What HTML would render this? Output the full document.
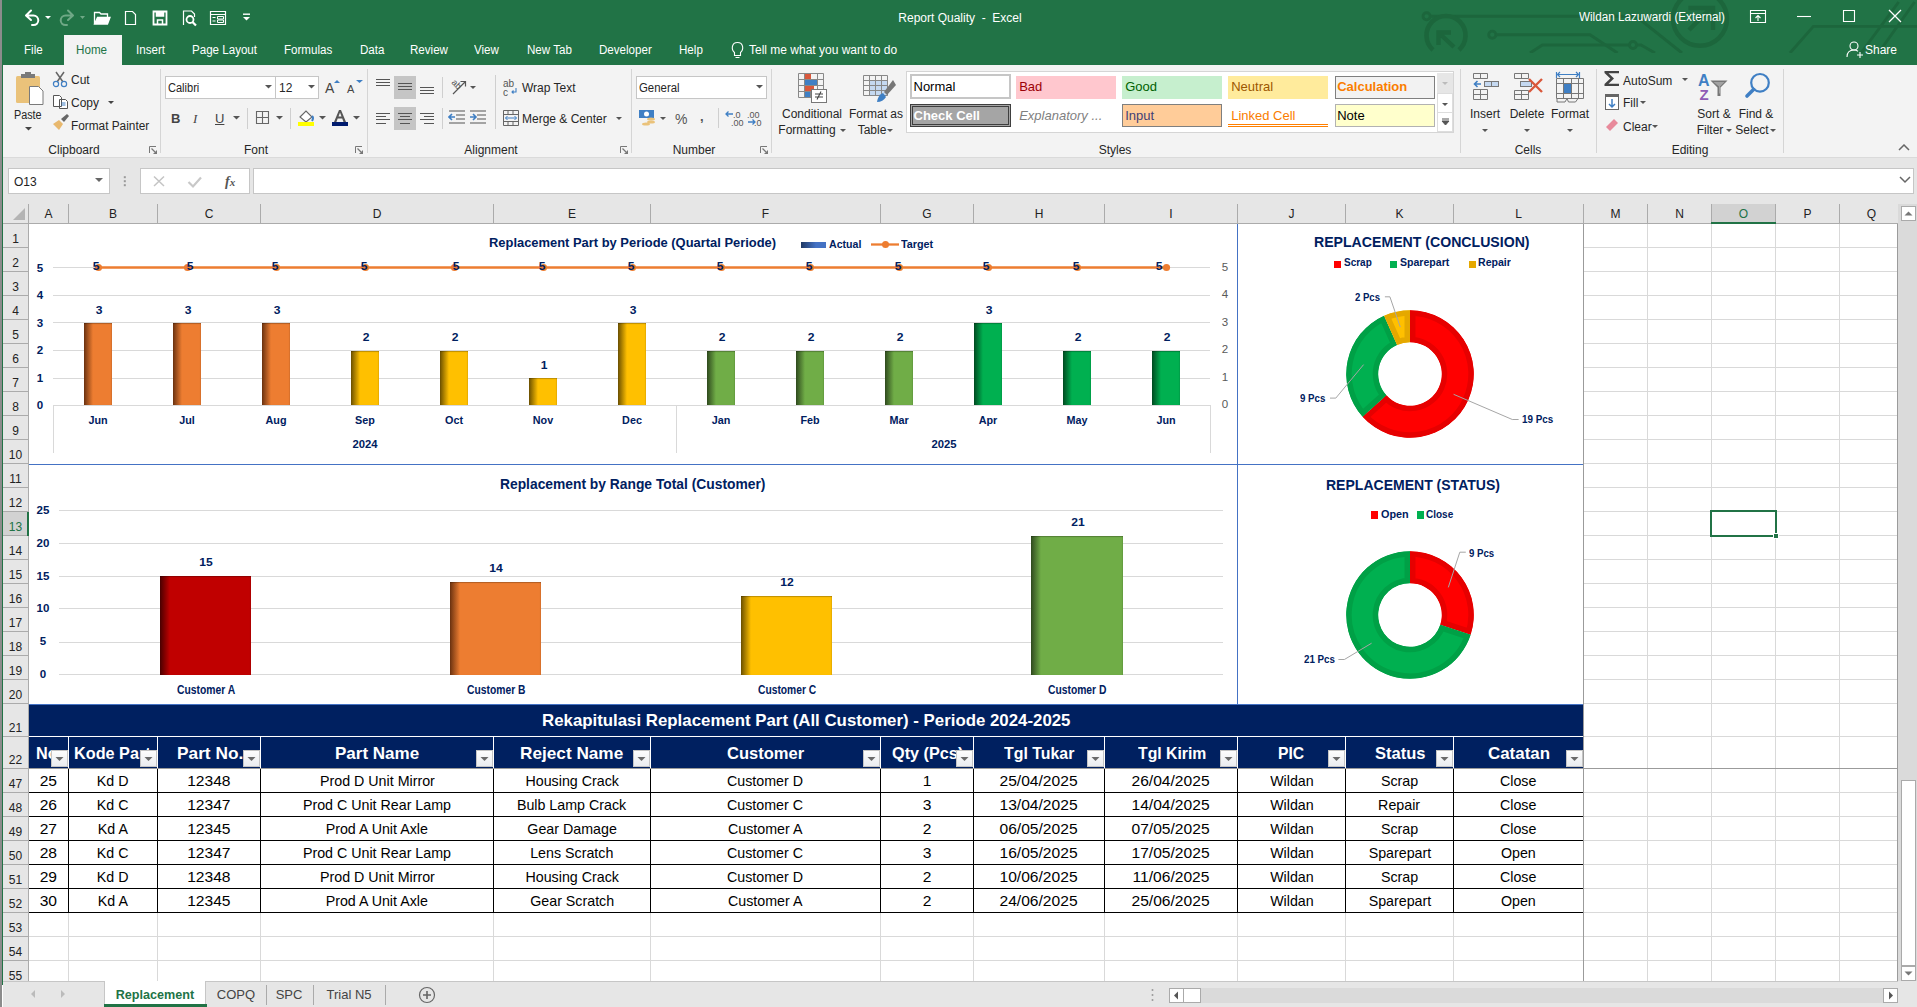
<!DOCTYPE html><html><head><meta charset="utf-8"><style>
html,body{margin:0;padding:0;width:1917px;height:1007px;overflow:hidden;background:#fff;font-family:"Liberation Sans",sans-serif;}
div{box-sizing:border-box}
</style></head><body><div style="position:relative;width:1917px;height:1007px;overflow:hidden">
<div style="position:absolute;left:0px;top:0px;width:2px;height:1007px;background:#8c8c8c;"></div>
<div style="position:absolute;left:2px;top:0px;width:1915px;height:65px;background:#217346;"></div>
<div style="position:absolute;left:2px;top:65px;width:1px;height:920px;background:#217346;"></div>
<svg style="position:absolute;left:0;top:0" width="1917" height="53"><g stroke="#1c663c" stroke-width="2.9" fill="none">
<circle cx="1426.6" cy="16.3" r="3.6"/><path d="M1430.2 16.3 H1636 L1682 53"/>
<path d="M1433 50 A19.5 19.5 0 1 1 1459 50" stroke-width="4.6"/><path d="M1454 47 L1440 34 M1438.5 45 V32.5 H1451" stroke-width="4.4"/>
<circle cx="1492.3" cy="34.7" r="3.6"/><path d="M1495.9 34.7 H1590 L1617.5 53"/>
<path d="M1530 53 L1542.4 45 H1629.5 M1636.5 45 H1641 L1655 53"/><circle cx="1633" cy="45" r="3.5"/>
<circle cx="1700" cy="18.8" r="27" stroke-width="4.4"/><path d="M1689 30 L1711 8 M1688.4 8 H1713 V30" stroke-width="4.4"/>
<path d="M1790 53 L1813.4 26.4 H1917 M1861 53 L1898.7 2 M1878.4 53 L1914.6 2"/>
</g></svg>
<svg style="position:absolute;left:0;top:0" width="300" height="36" fill="none" stroke="#fff" stroke-width="2">
<path d="M26 15.5 L31 10.5 M26 15.5 L31 20 M27 15.5 H33.5 a4.8 4.8 0 0 1 0 9.6 H32" stroke-linecap="round"/>
<path d="M45 16 h6 l-3 3z" fill="#fff" stroke="none"/>
<g stroke="#6fa886"><path d="M73 15.5 L68 10.5 M73 15.5 L68 20 M72 15.5 H65.5 a4.8 4.8 0 0 0 0 9.6 H67" stroke-linecap="round"/></g>
<path d="M80 16 h5 l-2.5 3z" fill="#6fa886" stroke="none"/>
<path d="M94.5 24 V12.5 h5 l1.5 1.5 h6.5 v3" stroke-width="1.3"/><path d="M94.5 24 l3 -6.5 h12.5 l-2.5 6.5z" fill="#fff" stroke-width="1.3"/>
<path d="M125.5 11.5 h7 l3 3 v10 h-10z" stroke-width="1.2"/>
<path d="M153.5 11.5 h13 v13 h-13z" stroke-width="1.8"/><path d="M156.5 11.5 v4.5 h7 v-4.5" fill="#fff" stroke-width="1.5"/><path d="M157.5 24.5 v-4.5 h5 v4.5" stroke-width="1.5"/>
<path d="M183.5 25 v-14 h8 l3 3 v3" stroke-width="1.2"/><circle cx="190" cy="19.5" r="3.5" stroke-width="1.8"/><path d="M192.5 22 l3.5 3.5" stroke-width="2.2"/>
<path d="M210.5 11.5 h15 v13 h-15z M210.5 14.5 h15" stroke-width="1.2"/><path d="M212.5 17.5 h3 M212.5 21 h3" stroke-width="1.2"/><path d="M217.5 16.5 h6 v2.5 h-6z M217.5 20 h6 v2.5 h-6z" stroke-width="1"/>
<path d="M243 14.2 h7" stroke-width="1.4"/><path d="M243 17 h7 l-3.5 3.5z" fill="#fff" stroke="none"/>
</svg>
<div style="position:absolute;left:960px;top:10.8px;font-size:12px;line-height:14.4px;color:#fff;font-weight:normal;font-style:normal;white-space:nowrap;transform:translateX(-50%);transform-origin:50% 50%;">Report Quality&nbsp; -&nbsp; Excel</div>
<div style="position:absolute;left:1579px;top:9.8px;font-size:12px;line-height:14.4px;color:#fff;font-weight:normal;font-style:normal;white-space:nowrap;transform: scaleX(0.973);transform-origin:0 50%;">Wildan Lazuwardi (External)</div>
<svg style="position:absolute;left:1740px;top:0px" width="177" height="36" fill="none" stroke="#fff" stroke-width="1.1">
<path d="M10.5 10.5 h15 v12 h-15z M10.5 13.5 h15 M18 21 v-5 M15.5 18 l2.5 -2.5 l2.5 2.5"/>
<path d="M57 16.5 h14"/>
<path d="M103.5 10.5 h11 v11 h-11z"/>
<path d="M149 10 l12 12 M161 10 l-12 12" stroke-width="1.3"/>
</svg>
<div style="position:absolute;left:64px;top:35px;width:58px;height:31px;background:#f3f3f3;"></div>
<div style="position:absolute;left:24px;top:42.8px;font-size:12px;line-height:14.4px;color:#fff;font-weight:normal;font-style:normal;white-space:nowrap;transform: scaleX(0.965);transform-origin:0 50%;">File</div>
<div style="position:absolute;left:136px;top:42.8px;font-size:12px;line-height:14.4px;color:#fff;font-weight:normal;font-style:normal;white-space:nowrap;transform: scaleX(0.965);transform-origin:0 50%;">Insert</div>
<div style="position:absolute;left:192px;top:42.8px;font-size:12px;line-height:14.4px;color:#fff;font-weight:normal;font-style:normal;white-space:nowrap;transform: scaleX(0.965);transform-origin:0 50%;">Page Layout</div>
<div style="position:absolute;left:284px;top:42.8px;font-size:12px;line-height:14.4px;color:#fff;font-weight:normal;font-style:normal;white-space:nowrap;transform: scaleX(0.965);transform-origin:0 50%;">Formulas</div>
<div style="position:absolute;left:360px;top:42.8px;font-size:12px;line-height:14.4px;color:#fff;font-weight:normal;font-style:normal;white-space:nowrap;transform: scaleX(0.965);transform-origin:0 50%;">Data</div>
<div style="position:absolute;left:410px;top:42.8px;font-size:12px;line-height:14.4px;color:#fff;font-weight:normal;font-style:normal;white-space:nowrap;transform: scaleX(0.965);transform-origin:0 50%;">Review</div>
<div style="position:absolute;left:474px;top:42.8px;font-size:12px;line-height:14.4px;color:#fff;font-weight:normal;font-style:normal;white-space:nowrap;transform: scaleX(0.965);transform-origin:0 50%;">View</div>
<div style="position:absolute;left:527px;top:42.8px;font-size:12px;line-height:14.4px;color:#fff;font-weight:normal;font-style:normal;white-space:nowrap;transform: scaleX(0.965);transform-origin:0 50%;">New Tab</div>
<div style="position:absolute;left:599px;top:42.8px;font-size:12px;line-height:14.4px;color:#fff;font-weight:normal;font-style:normal;white-space:nowrap;transform: scaleX(0.965);transform-origin:0 50%;">Developer</div>
<div style="position:absolute;left:679px;top:42.8px;font-size:12px;line-height:14.4px;color:#fff;font-weight:normal;font-style:normal;white-space:nowrap;transform: scaleX(0.965);transform-origin:0 50%;">Help</div>
<div style="position:absolute;left:76px;top:42.8px;font-size:12px;line-height:14.4px;color:#217346;font-weight:normal;font-style:normal;white-space:nowrap;transform: scaleX(0.97);transform-origin:0 50%;">Home</div>
<svg style="position:absolute;left:729px;top:39px" width="18" height="22" fill="none" stroke="#fff" stroke-width="1.1"><path d="M5.5 13.5 c-3.5 -3 -3 -10 3 -10 c6 0 6.5 7 3 10 v3 h-6z M6.5 18.5 h4"/></svg>
<div style="position:absolute;left:749px;top:42.8px;font-size:12px;line-height:14.4px;color:#fff;font-weight:normal;font-style:normal;white-space:nowrap;transform:;transform-origin:0 50%;">Tell me what you want to do</div>
<svg style="position:absolute;left:1845px;top:40px" width="20" height="20" fill="none" stroke="#fff" stroke-width="1.1"><circle cx="9" cy="6" r="4"/><path d="M2 17 c0 -5 3 -7 7 -7 c2 0 3 0.5 4 1.2 M12 15 h6 M15 12 v6"/></svg>
<div style="position:absolute;left:1865px;top:42.8px;font-size:12px;line-height:14.4px;color:#fff;font-weight:normal;font-style:normal;white-space:nowrap;transform:;transform-origin:0 50%;">Share</div>
<div style="position:absolute;left:3px;top:65px;width:1914px;height:93px;background:#f3f3f3;"></div>
<div style="position:absolute;left:3px;top:157px;width:1914px;height:1px;background:#dadada;"></div>
<div style="position:absolute;left:160px;top:69px;width:1px;height:84px;background:#d5d5d5;"></div>
<div style="position:absolute;left:367px;top:69px;width:1px;height:84px;background:#d5d5d5;"></div>
<div style="position:absolute;left:631px;top:69px;width:1px;height:84px;background:#d5d5d5;"></div>
<div style="position:absolute;left:771px;top:69px;width:1px;height:84px;background:#d5d5d5;"></div>
<div style="position:absolute;left:1460px;top:69px;width:1px;height:84px;background:#d5d5d5;"></div>
<div style="position:absolute;left:1596px;top:69px;width:1px;height:84px;background:#d5d5d5;"></div>
<div style="position:absolute;left:1783px;top:69px;width:1px;height:84px;background:#d5d5d5;"></div>
<div style="position:absolute;left:74px;top:142.8px;font-size:12px;line-height:14.4px;color:#262626;font-weight:normal;font-style:normal;white-space:nowrap;transform:translateX(-50%);transform-origin:50% 50%;">Clipboard</div>
<div style="position:absolute;left:256px;top:142.8px;font-size:12px;line-height:14.4px;color:#262626;font-weight:normal;font-style:normal;white-space:nowrap;transform:translateX(-50%);transform-origin:50% 50%;">Font</div>
<div style="position:absolute;left:491px;top:142.8px;font-size:12px;line-height:14.4px;color:#262626;font-weight:normal;font-style:normal;white-space:nowrap;transform:translateX(-50%);transform-origin:50% 50%;">Alignment</div>
<div style="position:absolute;left:694px;top:142.8px;font-size:12px;line-height:14.4px;color:#262626;font-weight:normal;font-style:normal;white-space:nowrap;transform:translateX(-50%);transform-origin:50% 50%;">Number</div>
<div style="position:absolute;left:1115px;top:142.8px;font-size:12px;line-height:14.4px;color:#262626;font-weight:normal;font-style:normal;white-space:nowrap;transform:translateX(-50%);transform-origin:50% 50%;">Styles</div>
<div style="position:absolute;left:1528px;top:142.8px;font-size:12px;line-height:14.4px;color:#262626;font-weight:normal;font-style:normal;white-space:nowrap;transform:translateX(-50%);transform-origin:50% 50%;">Cells</div>
<div style="position:absolute;left:1690px;top:142.8px;font-size:12px;line-height:14.4px;color:#262626;font-weight:normal;font-style:normal;white-space:nowrap;transform:translateX(-50%);transform-origin:50% 50%;">Editing</div>
<svg style="position:absolute;left:149px;top:145.5px" width="9" height="9"><path d="M0.5 7 V0.5 H7" fill="none" stroke="#777" stroke-width="1"/><path d="M2.5 2.5 L6 6" stroke="#777" stroke-width="1.2"/><path d="M8 4 V8 H4z" fill="#777"/></svg>
<svg style="position:absolute;left:355px;top:145.5px" width="9" height="9"><path d="M0.5 7 V0.5 H7" fill="none" stroke="#777" stroke-width="1"/><path d="M2.5 2.5 L6 6" stroke="#777" stroke-width="1.2"/><path d="M8 4 V8 H4z" fill="#777"/></svg>
<svg style="position:absolute;left:620px;top:145.5px" width="9" height="9"><path d="M0.5 7 V0.5 H7" fill="none" stroke="#777" stroke-width="1"/><path d="M2.5 2.5 L6 6" stroke="#777" stroke-width="1.2"/><path d="M8 4 V8 H4z" fill="#777"/></svg>
<svg style="position:absolute;left:760px;top:145.5px" width="9" height="9"><path d="M0.5 7 V0.5 H7" fill="none" stroke="#777" stroke-width="1"/><path d="M2.5 2.5 L6 6" stroke="#777" stroke-width="1.2"/><path d="M8 4 V8 H4z" fill="#777"/></svg>
<svg style="position:absolute;left:10px;top:72px" width="40" height="36">
<rect x="6" y="4" width="24" height="27" rx="1.5" fill="#eac27a"/>
<path d="M11 2 h14 v4 h-14z" fill="#7a7a7a"/><rect x="15" y="0" width="6" height="4" fill="#7a7a7a"/>
<path d="M19.5 14.5 h9 l4.5 4.5 v13.5 h-13.5z" fill="#fff" stroke="#7a7a7a" stroke-width="1"/>
</svg>
<div style="position:absolute;left:14px;top:107.8px;font-size:12px;line-height:14.4px;color:#262626;font-weight:normal;font-style:normal;white-space:nowrap;transform: scaleX(0.9);transform-origin:0 50%;">Paste</div>
<svg style="position:absolute;left:24.5px;top:127.25px" width="7.0" height="4.5"><path d="M0 0 H7.0 L3.5 3.5z" fill="#444"/></svg>
<svg style="position:absolute;left:52px;top:71px" width="18" height="64" fill="none">
<path d="M4 1 L11 11 M12 1 L5 11" stroke="#666" stroke-width="1.5"/><circle cx="4" cy="13" r="2.6" stroke="#3f7fc4" stroke-width="1.2"/><circle cx="12" cy="13" r="2.6" stroke="#3f7fc4" stroke-width="1.2"/>
<path d="M1.5 24.5 h6 l2 2 v9 h-8z M7.5 28.5 h6 l2 2 v7 h-8z" stroke="#555" stroke-width="1" fill="#fff"/><path d="M9.5 32 h4 M9.5 34 h4" stroke="#3f7fc4"/>
<path d="M9 48 l6 -5 l2 2 l-5 6z" fill="#666"/><path d="M1 53 l6 -4 l4 4 l-4 6z" fill="#e8b86d"/>
</svg>
<div style="position:absolute;left:71px;top:72.8px;font-size:12px;line-height:14.4px;color:#262626;font-weight:normal;font-style:normal;white-space:nowrap;transform:;transform-origin:0 50%;">Cut</div>
<div style="position:absolute;left:71px;top:95.8px;font-size:12px;line-height:14.4px;color:#262626;font-weight:normal;font-style:normal;white-space:nowrap;transform:;transform-origin:0 50%;">Copy</div>
<svg style="position:absolute;left:108px;top:100.5px" width="6" height="4"><path d="M0 0 H6 L3 3z" fill="#444"/></svg>
<div style="position:absolute;left:71px;top:118.8px;font-size:12px;line-height:14.4px;color:#262626;font-weight:normal;font-style:normal;white-space:nowrap;transform: scaleX(0.985);transform-origin:0 50%;">Format Painter</div>
<div style="position:absolute;left:165px;top:76px;width:154px;height:23px;background:#fff;border:1px solid #c6c6c6"></div>
<div style="position:absolute;left:275px;top:77px;width:1px;height:21px;background:#c6c6c6;"></div>
<div style="position:absolute;left:168px;top:80.8px;font-size:12px;line-height:14.4px;color:#262626;font-weight:normal;font-style:normal;white-space:nowrap;transform: scaleX(0.92);transform-origin:0 50%;">Calibri</div>
<div style="position:absolute;left:279px;top:80.8px;font-size:12px;line-height:14.4px;color:#262626;font-weight:normal;font-style:normal;white-space:nowrap;transform:;transform-origin:0 50%;">12</div>
<svg style="position:absolute;left:264.5px;top:85.25px" width="7.0" height="4.5"><path d="M0 0 H7.0 L3.5 3.5z" fill="#555"/></svg>
<svg style="position:absolute;left:307.5px;top:85.25px" width="7.0" height="4.5"><path d="M0 0 H7.0 L3.5 3.5z" fill="#555"/></svg>
<div style="position:absolute;left:325px;top:79.6px;font-size:14px;line-height:16.8px;color:#444;font-weight:normal;font-style:normal;white-space:nowrap;transform:;transform-origin:0 50%;">A</div>
<div style="position:absolute;left:347px;top:83.4px;font-size:11px;line-height:13.2px;color:#444;font-weight:normal;font-style:normal;white-space:nowrap;transform:;transform-origin:0 50%;">A</div>
<svg style="position:absolute;left:334px;top:79px" width="30" height="6"><path d="M0 4 h6 l-3 -3z" fill="#3f7fc4"/><path d="M22 1 h7 l-3.5 3z" fill="#3f7fc4"/></svg>
<div style="position:absolute;left:171px;top:111.2px;font-size:13px;line-height:15.6px;color:#444;font-weight:normal;font-style:normal;white-space:nowrap;transform:;transform-origin:0 50%;"><b>B</b></div>
<div style="position:absolute;left:193px;top:111.2px;font-size:13px;line-height:15.6px;color:#444;font-weight:normal;font-style:normal;white-space:nowrap;transform:;transform-origin:0 50%;font-family:'Liberation Serif'"><i>I</i></div>
<div style="position:absolute;left:215px;top:111.2px;font-size:13px;line-height:15.6px;color:#444;font-weight:normal;font-style:normal;white-space:nowrap;transform:;transform-origin:0 50%;"><u>U</u></div>
<svg style="position:absolute;left:232.5px;top:116.25px" width="7.0" height="4.5"><path d="M0 0 H7.0 L3.5 3.5z" fill="#555"/></svg>
<div style="position:absolute;left:247px;top:108px;width:1px;height:21px;background:#cfcfcf;"></div>
<div style="position:absolute;left:290px;top:108px;width:1px;height:21px;background:#cfcfcf;"></div>
<svg style="position:absolute;left:255px;top:110px" width="16" height="16" fill="none" stroke="#666" stroke-width="1.1"><path d="M1.5 1.5 h12 v12 h-12z M7.5 1.5 v12 M1.5 7.5 h12"/></svg>
<svg style="position:absolute;left:275.5px;top:116.25px" width="7.0" height="4.5"><path d="M0 0 H7.0 L3.5 3.5z" fill="#555"/></svg>
<svg style="position:absolute;left:297px;top:108px" width="20" height="20"><path d="M3 9 l6 -6 l6 6 l-6 5z" fill="#fff" stroke="#666" stroke-width="1.1"/><path d="M15 8 q2 2 0 5" stroke="#3f7fc4" stroke-width="2" fill="none"/><rect x="1" y="14" width="16" height="4" fill="#ffff00"/></svg>
<svg style="position:absolute;left:318.5px;top:116.25px" width="7.0" height="4.5"><path d="M0 0 H7.0 L3.5 3.5z" fill="#555"/></svg>
<svg style="position:absolute;left:331px;top:108px" width="20" height="20"><path d="M3 14 L8 2 h2 l5 12 h-2.5 l-1.3 -3.5 h-4.5 l-1.3 3.5z M7.5 8.5 h3 l-1.5 -4z" fill="#555"/><rect x="1" y="14" width="16" height="4" fill="#001b6e"/></svg>
<svg style="position:absolute;left:352.5px;top:116.25px" width="7.0" height="4.5"><path d="M0 0 H7.0 L3.5 3.5z" fill="#555"/></svg>
<div style="position:absolute;left:394px;top:76px;width:22px;height:23px;background:#c5c5c5;"></div>
<div style="position:absolute;left:394px;top:107px;width:22px;height:23px;background:#c5c5c5;"></div>
<svg style="position:absolute;left:376px;top:79px" width="20" height="20"><rect x="0" y="0" width="14" height="1" fill="#555"/><rect x="0" y="3" width="14" height="1" fill="#555"/><rect x="0" y="6" width="14" height="1" fill="#555"/></svg>
<svg style="position:absolute;left:398px;top:83px" width="20" height="20"><rect x="0" y="0" width="14" height="1" fill="#555"/><rect x="0" y="3" width="14" height="1" fill="#555"/><rect x="0" y="6" width="14" height="1" fill="#555"/></svg>
<svg style="position:absolute;left:420px;top:87px" width="20" height="20"><rect x="0" y="0" width="14" height="1" fill="#555"/><rect x="0" y="3" width="14" height="1" fill="#555"/><rect x="0" y="6" width="14" height="1" fill="#555"/></svg>
<svg style="position:absolute;left:376px;top:113px" width="20" height="20"><rect x="0" y="0" width="14" height="1" fill="#555"/><rect x="0" y="3" width="10" height="1" fill="#555"/><rect x="0" y="6" width="14" height="1" fill="#555"/><rect x="0" y="10" width="10" height="1" fill="#555"/></svg>
<svg style="position:absolute;left:398px;top:113px" width="20" height="20"><rect x="0" y="0" width="14" height="1" fill="#555"/><rect x="2" y="3" width="10" height="1" fill="#555"/><rect x="0" y="6" width="14" height="1" fill="#555"/><rect x="2" y="10" width="10" height="1" fill="#555"/></svg>
<svg style="position:absolute;left:420px;top:113px" width="20" height="20"><rect x="0" y="0" width="14" height="1" fill="#555"/><rect x="4" y="3" width="10" height="1" fill="#555"/><rect x="0" y="6" width="14" height="1" fill="#555"/><rect x="4" y="10" width="10" height="1" fill="#555"/></svg>
<div style="position:absolute;left:442px;top:77px;width:1px;height:21px;background:#cfcfcf;"></div>
<div style="position:absolute;left:442px;top:108px;width:1px;height:21px;background:#cfcfcf;"></div>
<div style="position:absolute;left:495px;top:75px;width:1px;height:54px;background:#cfcfcf;"></div>
<svg style="position:absolute;left:448px;top:77px" width="24" height="20"><text x="0" y="0" transform="translate(3,6) rotate(45)" font-family="Liberation Sans" font-size="9" fill="#555">ab</text><path d="M5 17 L17 5 M12.5 4.5 h5 v5" fill="none" stroke="#555" stroke-width="1.2"/></svg>
<svg style="position:absolute;left:470px;top:85.5px" width="6" height="4"><path d="M0 0 H6 L3 3z" fill="#555"/></svg>
<div style="position:absolute;left:503px;top:78.0px;font-size:10px;line-height:12.0px;color:#555;font-weight:normal;font-style:normal;white-space:nowrap;transform:;transform-origin:0 50%;">ab</div>
<div style="position:absolute;left:503px;top:87.0px;font-size:10px;line-height:12.0px;color:#555;font-weight:normal;font-style:normal;white-space:nowrap;transform:;transform-origin:0 50%;">c</div>
<svg style="position:absolute;left:510px;top:87px" width="8" height="8"><path d="M6 1 v4 h-4 M3.5 3.5 l-1.5 1.5 l1.5 1.5" fill="none" stroke="#3f7fc4" stroke-width="1.1"/></svg>
<div style="position:absolute;left:522px;top:80.8px;font-size:12px;line-height:14.4px;color:#262626;font-weight:normal;font-style:normal;white-space:nowrap;transform:;transform-origin:0 50%;">Wrap Text</div>
<svg style="position:absolute;left:448px;top:110px" width="42" height="16" fill="none" stroke-width="1.1"><g stroke="#555"><path d="M1 1 h16 M8 5 h9 M8 9 h9 M1 13 h16 M22 1 h16 M29 5 h9 M29 9 h9 M22 13 h16"/></g><path d="M7 7 h-6 M4 4 l-3 3 l3 3 M22 7 h6 M25 4 l3 3 l-3 3" stroke="#3f7fc4" stroke-width="1.6"/></svg>
<svg style="position:absolute;left:502px;top:109px" width="18" height="18" fill="none" stroke="#666" stroke-width="1"><path d="M1.5 1.5 h15 v15 h-15z M1.5 5.5 h15 M1.5 12.5 h15 M6 1.5 v4 M11 1.5 v4 M6 12.5 v4 M11 12.5 v4"/><path d="M3.5 9 h11 M5.5 7 l-2 2 l2 2 M12.5 7 l2 2 l-2 2" stroke="#3f7fc4"/></svg>
<div style="position:absolute;left:522px;top:111.8px;font-size:12px;line-height:14.4px;color:#262626;font-weight:normal;font-style:normal;white-space:nowrap;transform:;transform-origin:0 50%;">Merge &amp; Center</div>
<svg style="position:absolute;left:616px;top:116.5px" width="6" height="4"><path d="M0 0 H6 L3 3z" fill="#555"/></svg>
<div style="position:absolute;left:636px;top:76px;width:131px;height:23px;background:#fff;border:1px solid #c6c6c6"></div>
<div style="position:absolute;left:639px;top:80.8px;font-size:12px;line-height:14.4px;color:#262626;font-weight:normal;font-style:normal;white-space:nowrap;transform: scaleX(0.95);transform-origin:0 50%;">General</div>
<svg style="position:absolute;left:755.5px;top:85.25px" width="7.0" height="4.5"><path d="M0 0 H7.0 L3.5 3.5z" fill="#555"/></svg>
<svg style="position:absolute;left:638px;top:109px" width="20" height="18"><rect x="1" y="1" width="15" height="8" fill="#3f7fc4"/><circle cx="8.5" cy="5" r="2.5" fill="#fff"/><g fill="#eac27a"><ellipse cx="13" cy="10" rx="4" ry="1.6"/><ellipse cx="13" cy="13" rx="4" ry="1.6"/><ellipse cx="8" cy="15" rx="4" ry="1.6"/></g></svg>
<svg style="position:absolute;left:660px;top:116.5px" width="6" height="4"><path d="M0 0 H6 L3 3z" fill="#555"/></svg>
<div style="position:absolute;left:675px;top:110.6px;font-size:14px;line-height:16.8px;color:#555;font-weight:normal;font-style:normal;white-space:nowrap;transform:;transform-origin:0 50%;">%</div>
<div style="position:absolute;left:700px;top:109.2px;font-size:13px;line-height:15.6px;color:#555;font-weight:normal;font-style:normal;white-space:nowrap;transform:;transform-origin:0 50%;"><b>,</b></div>
<div style="position:absolute;left:718px;top:108px;width:1px;height:20px;background:#cfcfcf;"></div>
<div style="position:absolute;left:726px;top:109.6px;font-size:9px;line-height:10.8px;color:#555;font-weight:normal;font-style:normal;white-space:nowrap;transform:;transform-origin:0 50%;left:733px">.0</div>
<div style="position:absolute;left:731px;top:117.6px;font-size:9px;line-height:10.8px;color:#555;font-weight:normal;font-style:normal;white-space:nowrap;transform:;transform-origin:0 50%;">.00</div>
<div style="position:absolute;left:747px;top:109.6px;font-size:9px;line-height:10.8px;color:#555;font-weight:normal;font-style:normal;white-space:nowrap;transform:;transform-origin:0 50%;">.00</div>
<div style="position:absolute;left:754px;top:117.6px;font-size:9px;line-height:10.8px;color:#555;font-weight:normal;font-style:normal;white-space:nowrap;transform:;transform-origin:0 50%;">.0</div>
<svg style="position:absolute;left:724px;top:110px" width="40" height="16" fill="none" stroke="#3f7fc4" stroke-width="1.3"><path d="M9 4 h-7 M4.5 1.5 l-2.5 2.5 l2.5 2.5 M24 12 h7 M28.5 9.5 l2.5 2.5 l-2.5 2.5"/></svg>
<svg style="position:absolute;left:796px;top:72px" width="34" height="32">
<g fill="none" stroke="#888" stroke-width="1"><path d="M2.5 1.5 h25 v24 h-25z M2.5 7.5 h25 M2.5 13.5 h25 M2.5 19.5 h25 M8.5 1.5 v24 M14.5 1.5 v24 M21.5 1.5 v24"/></g>
<rect x="9" y="2" width="6" height="5" fill="#d9583b"/><rect x="9" y="8" width="12" height="5" fill="#3f7fc4"/><rect x="9" y="14" width="9" height="5" fill="#d9583b"/><rect x="9" y="20" width="5" height="5" fill="#3f7fc4"/>
<rect x="15.5" y="17.5" width="15" height="13" fill="#fff" stroke="#777"/><path d="M19 22 h8 M19 25 h8 M25 19.5 l-4 8" stroke="#444" stroke-width="1.1"/>
</svg>
<div style="position:absolute;left:812px;top:106.8px;font-size:12px;line-height:14.4px;color:#262626;font-weight:normal;font-style:normal;white-space:nowrap;transform:translateX(-50%);transform-origin:50% 50%;">Conditional</div>
<div style="position:absolute;left:807px;top:122.8px;font-size:12px;line-height:14.4px;color:#262626;font-weight:normal;font-style:normal;white-space:nowrap;transform:translateX(-50%);transform-origin:50% 50%;">Formatting</div>
<svg style="position:absolute;left:840px;top:128.5px" width="6" height="4"><path d="M0 0 H6 L3 3z" fill="#555"/></svg>
<svg style="position:absolute;left:862px;top:74px" width="34" height="30">
<g fill="#c5d9f1"><rect x="7" y="6" width="19" height="16"/></g>
<g fill="none" stroke="#888" stroke-width="1"><path d="M1.5 1.5 h24 v20 h-24z M1.5 6.5 h24 M1.5 11.5 h24 M1.5 16.5 h24 M7.5 1.5 v20 M13.5 1.5 v20 M19.5 1.5 v20"/></g>
<path d="M31 6 l-9 12 l3 3 l9 -10z" fill="#777"/><path d="M21 19 q-5 2 -6 9 q6 0 9 -5z" fill="#3f7fc4"/>
</svg>
<div style="position:absolute;left:876px;top:106.8px;font-size:12px;line-height:14.4px;color:#262626;font-weight:normal;font-style:normal;white-space:nowrap;transform:translateX(-50%);transform-origin:50% 50%;">Format as</div>
<div style="position:absolute;left:872px;top:122.8px;font-size:12px;line-height:14.4px;color:#262626;font-weight:normal;font-style:normal;white-space:nowrap;transform:translateX(-50%);transform-origin:50% 50%;">Table</div>
<svg style="position:absolute;left:887px;top:128.5px" width="6" height="4"><path d="M0 0 H6 L3 3z" fill="#555"/></svg>
<div style="position:absolute;left:906px;top:71px;width:548px;height:62px;background:#fff;border:1px solid #d5d5d5"></div>
<div style="position:absolute;left:910px;top:74px;width:101px;height:25px;background:#fff;border:2px solid #c6c6c6"></div>
<div style="position:absolute;left:913.5px;top:79.4px;font-size:13px;line-height:15.6px;color:#000;font-weight:normal;font-style:normal;white-space:nowrap;transform:;transform-origin:0 50%;">Normal</div>
<div style="position:absolute;left:1016px;top:76px;width:100px;height:23px;background:#ffc7ce;"></div>
<div style="position:absolute;left:1019.2px;top:79.4px;font-size:13px;line-height:15.6px;color:#9c0006;font-weight:normal;font-style:normal;white-space:nowrap;transform:;transform-origin:0 50%;">Bad</div>
<div style="position:absolute;left:1122px;top:76px;width:100px;height:23px;background:#c6efce;"></div>
<div style="position:absolute;left:1125.2px;top:79.4px;font-size:13px;line-height:15.6px;color:#006100;font-weight:normal;font-style:normal;white-space:nowrap;transform:;transform-origin:0 50%;">Good</div>
<div style="position:absolute;left:1228px;top:76px;width:100px;height:23px;background:#ffeb9c;"></div>
<div style="position:absolute;left:1231.2px;top:79.4px;font-size:13px;line-height:15.6px;color:#9c5700;font-weight:normal;font-style:normal;white-space:nowrap;transform:;transform-origin:0 50%;">Neutral</div>
<div style="position:absolute;left:1335px;top:76px;width:100px;height:23px;background:#f2f2f2;border:1px solid #7f7f7f"></div>
<div style="position:absolute;left:1337.2px;top:79.4px;font-size:13px;line-height:15.6px;color:#fa7d00;font-weight:bold;font-style:normal;white-space:nowrap;transform:;transform-origin:0 50%;">Calculation</div>
<div style="position:absolute;left:910px;top:104px;width:101px;height:23px;background:#a5a5a5;border:3px double #3f3f3f"></div>
<div style="position:absolute;left:913.5px;top:107.7px;font-size:13px;line-height:15.6px;color:#fff;font-weight:bold;font-style:normal;white-space:nowrap;transform:;transform-origin:0 50%;">Check Cell</div>
<div style="position:absolute;left:1016px;top:104px;width:100px;height:23px;background:#fff;"></div>
<div style="position:absolute;left:1019.2px;top:107.7px;font-size:13px;line-height:15.6px;color:#7f7f7f;font-weight:normal;font-style:italic;white-space:nowrap;transform:;transform-origin:0 50%;">Explanatory ...</div>
<div style="position:absolute;left:1122px;top:104px;width:100px;height:23px;background:#ffcc99;border:1px solid #7f7f7f"></div>
<div style="position:absolute;left:1125.2px;top:107.7px;font-size:13px;line-height:15.6px;color:#3f3f76;font-weight:normal;font-style:normal;white-space:nowrap;transform:;transform-origin:0 50%;">Input</div>
<div style="position:absolute;left:1228px;top:104px;width:100px;height:23px;background:#fff;border-bottom:3px double #ff8001"></div>
<div style="position:absolute;left:1231.2px;top:107.7px;font-size:13px;line-height:15.6px;color:#fa7d00;font-weight:normal;font-style:normal;white-space:nowrap;transform:;transform-origin:0 50%;">Linked Cell</div>
<div style="position:absolute;left:1335px;top:104px;width:100px;height:23px;background:#ffffcc;border:1px solid #b2b2b2"></div>
<div style="position:absolute;left:1337.2px;top:107.7px;font-size:13px;line-height:15.6px;color:#000;font-weight:normal;font-style:normal;white-space:nowrap;transform:;transform-origin:0 50%;">Note</div>
<div style="position:absolute;left:1437px;top:73px;width:16px;height:20px;background:#e6e6e6;"></div>
<div style="position:absolute;left:1437px;top:93px;width:16px;height:20px;background:#fff;border:1px solid #ddd"></div>
<div style="position:absolute;left:1437px;top:112px;width:16px;height:20px;background:#fff;border:1px solid #ddd"></div>
<svg style="position:absolute;left:1442px;top:81.5px" width="6" height="4"><path d="M0 0 H6 L3 3z" fill="#bbb"/></svg>
<svg style="position:absolute;left:1442px;top:102.5px" width="6" height="4"><path d="M0 0 H6 L3 3z" fill="#555"/></svg>
<svg style="position:absolute;left:1441px;top:118px" width="9" height="9"><path d="M1 1 h7 M1 3 h7 l-3.5 4z" fill="#555" stroke="#555" stroke-width="1"/></svg>
<svg style="position:absolute;left:1465px;top:66px" width="130" height="40" fill="none" stroke="#777" stroke-width="1">
<path d="M8.5 7.5 h14 v5 h-14z M15.5 7.5 v5 M8.5 23.5 h14 v10 h-14z M8.5 28.5 h14 M15.5 23.5 v10"/>
<rect x="19.5" y="15.5" width="14" height="5" fill="#c5d9f1"/><path d="M26.5 15.5 v5"/><path d="M16 18 h-6 M12.5 15 l-3 3 l3 3" stroke="#3f7fc4" stroke-width="1.6"/>
<path d="M49.5 7.5 h14 v5 h-14z M56.5 7.5 v5 M49.5 24.5 h14 v9 h-14z M49.5 28.5 h14 M56.5 24.5 v9"/>
<rect x="55.5" y="15.5" width="11" height="5" fill="#c5d9f1"/><path d="M64 13 l13 13 M77 13 l-13 13" stroke="#d9583b" stroke-width="2.4"/>
<path d="M91.5 12.5 h27 v20 h-27z M91.5 17.5 h27 M91.5 27.5 h27 M98.5 12.5 v20 M106.5 12.5 v20 M113.5 12.5 v20 M92 32.5 v3.5 h8 l2 -3.5 M102 32.5 l1.5 3.5 h7 l2.5 -3.5"/>
<rect x="99" y="18" width="7" height="9" fill="#3f7fc4" stroke="none"/><path d="M91.5 6 v6 M114.5 6 v6 M92.5 8.5 h21 M95 6 l-2.5 2.5 l2.5 2.5 M111 6 l2.5 2.5 l-2.5 2.5" stroke="#3f7fc4" stroke-width="1.2"/>
</svg>
<div style="position:absolute;left:1485px;top:106.8px;font-size:12px;line-height:14.4px;color:#262626;font-weight:normal;font-style:normal;white-space:nowrap;transform:translateX(-50%);transform-origin:50% 50%;">Insert</div>
<div style="position:absolute;left:1527px;top:106.8px;font-size:12px;line-height:14.4px;color:#262626;font-weight:normal;font-style:normal;white-space:nowrap;transform:translateX(-50%);transform-origin:50% 50%;">Delete</div>
<div style="position:absolute;left:1570px;top:106.8px;font-size:12px;line-height:14.4px;color:#262626;font-weight:normal;font-style:normal;white-space:nowrap;transform:translateX(-50%);transform-origin:50% 50%;">Format</div>
<svg style="position:absolute;left:1482px;top:128.5px" width="6" height="4"><path d="M0 0 H6 L3 3z" fill="#555"/></svg>
<svg style="position:absolute;left:1524px;top:128.5px" width="6" height="4"><path d="M0 0 H6 L3 3z" fill="#555"/></svg>
<svg style="position:absolute;left:1567px;top:128.5px" width="6" height="4"><path d="M0 0 H6 L3 3z" fill="#555"/></svg>
<svg style="position:absolute;left:1603px;top:70px" width="18" height="18"><path d="M1.5 1 H16 V3.2 H5.5 L11 8.5 L5.5 13.8 H16 V16 H1.5 V14 L7.3 8.5 L1.5 3z" fill="#444"/></svg>
<div style="position:absolute;left:1623px;top:73.8px;font-size:12px;line-height:14.4px;color:#262626;font-weight:normal;font-style:normal;white-space:nowrap;transform:;transform-origin:0 50%;">AutoSum</div>
<svg style="position:absolute;left:1682px;top:77.5px" width="6" height="4"><path d="M0 0 H6 L3 3z" fill="#555"/></svg>
<svg style="position:absolute;left:1604px;top:93px" width="18" height="40"><rect x="1.5" y="2.5" width="13" height="14" fill="#fff" stroke="#666"/><rect x="1" y="1" width="14" height="3" fill="#666"/><path d="M8 6 v8 M5 11 l3 3 l3 -3" stroke="#3f7fc4" stroke-width="1.5" fill="none"/>
<path d="M2 34 l8 -8 l4 4 l-8 8z" fill="#e88a9b"/></svg>
<div style="position:absolute;left:1623px;top:95.8px;font-size:12px;line-height:14.4px;color:#262626;font-weight:normal;font-style:normal;white-space:nowrap;transform:;transform-origin:0 50%;">Fill</div>
<svg style="position:absolute;left:1640px;top:100.5px" width="6" height="4"><path d="M0 0 H6 L3 3z" fill="#555"/></svg>
<div style="position:absolute;left:1623px;top:119.8px;font-size:12px;line-height:14.4px;color:#262626;font-weight:normal;font-style:normal;white-space:nowrap;transform:;transform-origin:0 50%;">Clear</div>
<svg style="position:absolute;left:1652px;top:124.5px" width="6" height="4"><path d="M0 0 H6 L3 3z" fill="#555"/></svg>
<svg style="position:absolute;left:1697px;top:72px" width="80" height="32">
<text x="1" y="13.5" font-family="Liberation Sans" font-weight="bold" font-size="16" fill="#3f7fc4">A</text><text x="2.5" y="28" font-family="Liberation Sans" font-weight="bold" font-size="15" fill="#8e5ab5">Z</text>
<path d="M13.5 8.5 h17 l-7 7 v8.5 h-3 v-8.5z" fill="#777"/><path d="M16.5 10 h11 l-4.5 4.5 v7 h-1 v-7z" fill="#f3f3f3" opacity="0.35"/>
<circle cx="63" cy="10.8" r="8.8" fill="none" stroke="#3f7fc4" stroke-width="2.2"/><path d="M56.5 17.5 l-6.5 6.5" stroke="#3f7fc4" stroke-width="3.6" stroke-linecap="round"/>
</svg>
<div style="position:absolute;left:1714px;top:106.8px;font-size:12px;line-height:14.4px;color:#262626;font-weight:normal;font-style:normal;white-space:nowrap;transform:translateX(-50%);transform-origin:50% 50%;">Sort &amp;</div>
<div style="position:absolute;left:1710px;top:122.8px;font-size:12px;line-height:14.4px;color:#262626;font-weight:normal;font-style:normal;white-space:nowrap;transform:translateX(-50%);transform-origin:50% 50%;">Filter</div>
<svg style="position:absolute;left:1726px;top:128.5px" width="6" height="4"><path d="M0 0 H6 L3 3z" fill="#555"/></svg>
<div style="position:absolute;left:1756px;top:106.8px;font-size:12px;line-height:14.4px;color:#262626;font-weight:normal;font-style:normal;white-space:nowrap;transform:translateX(-50%);transform-origin:50% 50%;">Find &amp;</div>
<div style="position:absolute;left:1752px;top:122.8px;font-size:12px;line-height:14.4px;color:#262626;font-weight:normal;font-style:normal;white-space:nowrap;transform:translateX(-50%);transform-origin:50% 50%;">Select</div>
<svg style="position:absolute;left:1770px;top:128.5px" width="6" height="4"><path d="M0 0 H6 L3 3z" fill="#555"/></svg>
<svg style="position:absolute;left:1898px;top:144px" width="12" height="8"><path d="M1 6 l5 -5 l5 5" fill="none" stroke="#666" stroke-width="1.5"/></svg>
<div style="position:absolute;left:3px;top:158px;width:1914px;height:46px;background:#e6e6e6;"></div>
<div style="position:absolute;left:8px;top:168px;width:102px;height:26px;background:#fff;border:1px solid #c6c6c6"></div>
<div style="position:absolute;left:14px;top:174.8px;font-size:12px;line-height:14.4px;color:#222;font-weight:normal;font-style:normal;white-space:nowrap;transform:;transform-origin:0 50%;">O13</div>
<svg style="position:absolute;left:95px;top:178.0px" width="8" height="5"><path d="M0 0 H8 L4 4z" fill="#666"/></svg>
<svg style="position:absolute;left:123px;top:175px" width="4" height="14"><rect x="0.8" y="1.2" width="2" height="2" fill="#999"/><rect x="0.8" y="5.2" width="2" height="2" fill="#999"/><rect x="0.8" y="9.2" width="2" height="2" fill="#999"/></svg>
<div style="position:absolute;left:140px;top:168px;width:110px;height:26px;background:#fff;border:1px solid #c6c6c6"></div>
<svg style="position:absolute;left:150px;top:173px" width="96" height="16" fill="none"><path d="M4 3.5 l10 9.5 M14 3.5 l-10 9.5" stroke="#c4c4c4" stroke-width="1.5"/><path d="M38.5 9 l4.5 4.5 l8 -9" stroke="#c8c8c8" stroke-width="2.2"/></svg>
<div style="position:absolute;left:225px;top:173.6px;font-size:14px;line-height:16.8px;color:#555;font-weight:normal;font-style:normal;white-space:nowrap;transform:;transform-origin:0 50%;font-family:'Liberation Serif'"><b><i>f</i><span style="font-size:11px"><i>x</i></span></b></div>
<div style="position:absolute;left:253px;top:168px;width:1661px;height:26px;background:#fff;border:1px solid #c6c6c6"></div>
<svg style="position:absolute;left:1899px;top:176px" width="12" height="8"><path d="M1 1 l5 5 l5 -5" fill="none" stroke="#666" stroke-width="1.5"/></svg>
<div style="position:absolute;left:3px;top:204px;width:1914px;height:20px;background:#e6e6e6;"></div>
<div style="position:absolute;left:3px;top:223px;width:1895px;height:1px;background:#ababab;"></div>
<div style="position:absolute;left:28px;top:204px;width:1px;height:780px;background:#ababab;"></div>
<svg style="position:absolute;left:13px;top:208px" width="13" height="13"><path d="M12 0 V12 H0z" fill="#b4b4b4"/></svg>
<div style="position:absolute;left:48.5px;top:206.8px;font-size:12px;line-height:14.4px;color:#222;font-weight:normal;font-style:normal;white-space:nowrap;transform:translateX(-50%);transform-origin:50% 50%;">A</div>
<div style="position:absolute;left:68px;top:204px;width:1px;height:19px;background:#ababab;"></div>
<div style="position:absolute;left:113.0px;top:206.8px;font-size:12px;line-height:14.4px;color:#222;font-weight:normal;font-style:normal;white-space:nowrap;transform:translateX(-50%);transform-origin:50% 50%;">B</div>
<div style="position:absolute;left:157px;top:204px;width:1px;height:19px;background:#ababab;"></div>
<div style="position:absolute;left:209.0px;top:206.8px;font-size:12px;line-height:14.4px;color:#222;font-weight:normal;font-style:normal;white-space:nowrap;transform:translateX(-50%);transform-origin:50% 50%;">C</div>
<div style="position:absolute;left:260px;top:204px;width:1px;height:19px;background:#ababab;"></div>
<div style="position:absolute;left:377.0px;top:206.8px;font-size:12px;line-height:14.4px;color:#222;font-weight:normal;font-style:normal;white-space:nowrap;transform:translateX(-50%);transform-origin:50% 50%;">D</div>
<div style="position:absolute;left:493px;top:204px;width:1px;height:19px;background:#ababab;"></div>
<div style="position:absolute;left:572.0px;top:206.8px;font-size:12px;line-height:14.4px;color:#222;font-weight:normal;font-style:normal;white-space:nowrap;transform:translateX(-50%);transform-origin:50% 50%;">E</div>
<div style="position:absolute;left:650px;top:204px;width:1px;height:19px;background:#ababab;"></div>
<div style="position:absolute;left:765.5px;top:206.8px;font-size:12px;line-height:14.4px;color:#222;font-weight:normal;font-style:normal;white-space:nowrap;transform:translateX(-50%);transform-origin:50% 50%;">F</div>
<div style="position:absolute;left:880px;top:204px;width:1px;height:19px;background:#ababab;"></div>
<div style="position:absolute;left:927.0px;top:206.8px;font-size:12px;line-height:14.4px;color:#222;font-weight:normal;font-style:normal;white-space:nowrap;transform:translateX(-50%);transform-origin:50% 50%;">G</div>
<div style="position:absolute;left:973px;top:204px;width:1px;height:19px;background:#ababab;"></div>
<div style="position:absolute;left:1039.0px;top:206.8px;font-size:12px;line-height:14.4px;color:#222;font-weight:normal;font-style:normal;white-space:nowrap;transform:translateX(-50%);transform-origin:50% 50%;">H</div>
<div style="position:absolute;left:1104px;top:204px;width:1px;height:19px;background:#ababab;"></div>
<div style="position:absolute;left:1171.0px;top:206.8px;font-size:12px;line-height:14.4px;color:#222;font-weight:normal;font-style:normal;white-space:nowrap;transform:translateX(-50%);transform-origin:50% 50%;">I</div>
<div style="position:absolute;left:1237px;top:204px;width:1px;height:19px;background:#ababab;"></div>
<div style="position:absolute;left:1291.5px;top:206.8px;font-size:12px;line-height:14.4px;color:#222;font-weight:normal;font-style:normal;white-space:nowrap;transform:translateX(-50%);transform-origin:50% 50%;">J</div>
<div style="position:absolute;left:1345px;top:204px;width:1px;height:19px;background:#ababab;"></div>
<div style="position:absolute;left:1399.5px;top:206.8px;font-size:12px;line-height:14.4px;color:#222;font-weight:normal;font-style:normal;white-space:nowrap;transform:translateX(-50%);transform-origin:50% 50%;">K</div>
<div style="position:absolute;left:1453px;top:204px;width:1px;height:19px;background:#ababab;"></div>
<div style="position:absolute;left:1518.5px;top:206.8px;font-size:12px;line-height:14.4px;color:#222;font-weight:normal;font-style:normal;white-space:nowrap;transform:translateX(-50%);transform-origin:50% 50%;">L</div>
<div style="position:absolute;left:1583px;top:204px;width:1px;height:19px;background:#ababab;"></div>
<div style="position:absolute;left:1615.5px;top:206.8px;font-size:12px;line-height:14.4px;color:#222;font-weight:normal;font-style:normal;white-space:nowrap;transform:translateX(-50%);transform-origin:50% 50%;">M</div>
<div style="position:absolute;left:1647px;top:204px;width:1px;height:19px;background:#ababab;"></div>
<div style="position:absolute;left:1679.5px;top:206.8px;font-size:12px;line-height:14.4px;color:#222;font-weight:normal;font-style:normal;white-space:nowrap;transform:translateX(-50%);transform-origin:50% 50%;">N</div>
<div style="position:absolute;left:1711px;top:204px;width:1px;height:19px;background:#ababab;"></div>
<div style="position:absolute;left:1743.5px;top:206.8px;font-size:12px;line-height:14.4px;color:#222;font-weight:normal;font-style:normal;white-space:nowrap;transform:translateX(-50%);transform-origin:50% 50%;">O</div>
<div style="position:absolute;left:1775px;top:204px;width:1px;height:19px;background:#ababab;"></div>
<div style="position:absolute;left:1807.5px;top:206.8px;font-size:12px;line-height:14.4px;color:#222;font-weight:normal;font-style:normal;white-space:nowrap;transform:translateX(-50%);transform-origin:50% 50%;">P</div>
<div style="position:absolute;left:1839px;top:204px;width:1px;height:19px;background:#ababab;"></div>
<div style="position:absolute;left:1871.5px;top:206.8px;font-size:12px;line-height:14.4px;color:#222;font-weight:normal;font-style:normal;white-space:nowrap;transform:translateX(-50%);transform-origin:50% 50%;">Q</div>
<div style="position:absolute;left:1712px;top:204px;width:63px;height:19px;background:#d2d2d2;"></div>
<div style="position:absolute;left:1711px;top:222px;width:65px;height:2px;background:#217346;"></div>
<div style="position:absolute;left:1743.5px;top:206.8px;font-size:12px;line-height:14.4px;color:#217346;font-weight:normal;font-style:normal;white-space:nowrap;transform:translateX(-50%);transform-origin:50% 50%;">O</div>
<div style="position:absolute;left:3px;top:224px;width:25px;height:757px;background:#e6e6e6;"></div>
<div style="position:absolute;left:3px;top:247px;width:25px;height:1px;background:#ababab;"></div>
<div style="position:absolute;left:15.5px;top:231.7px;font-size:12px;line-height:14.4px;color:#222;font-weight:normal;font-style:normal;white-space:nowrap;transform:translateX(-50%);transform-origin:50% 50%;">1</div>
<div style="position:absolute;left:3px;top:271px;width:25px;height:1px;background:#ababab;"></div>
<div style="position:absolute;left:15.5px;top:255.7px;font-size:12px;line-height:14.4px;color:#222;font-weight:normal;font-style:normal;white-space:nowrap;transform:translateX(-50%);transform-origin:50% 50%;">2</div>
<div style="position:absolute;left:3px;top:295px;width:25px;height:1px;background:#ababab;"></div>
<div style="position:absolute;left:15.5px;top:279.7px;font-size:12px;line-height:14.4px;color:#222;font-weight:normal;font-style:normal;white-space:nowrap;transform:translateX(-50%);transform-origin:50% 50%;">3</div>
<div style="position:absolute;left:3px;top:319px;width:25px;height:1px;background:#ababab;"></div>
<div style="position:absolute;left:15.5px;top:303.7px;font-size:12px;line-height:14.4px;color:#222;font-weight:normal;font-style:normal;white-space:nowrap;transform:translateX(-50%);transform-origin:50% 50%;">4</div>
<div style="position:absolute;left:3px;top:343px;width:25px;height:1px;background:#ababab;"></div>
<div style="position:absolute;left:15.5px;top:327.7px;font-size:12px;line-height:14.4px;color:#222;font-weight:normal;font-style:normal;white-space:nowrap;transform:translateX(-50%);transform-origin:50% 50%;">5</div>
<div style="position:absolute;left:3px;top:367px;width:25px;height:1px;background:#ababab;"></div>
<div style="position:absolute;left:15.5px;top:351.7px;font-size:12px;line-height:14.4px;color:#222;font-weight:normal;font-style:normal;white-space:nowrap;transform:translateX(-50%);transform-origin:50% 50%;">6</div>
<div style="position:absolute;left:3px;top:391px;width:25px;height:1px;background:#ababab;"></div>
<div style="position:absolute;left:15.5px;top:375.7px;font-size:12px;line-height:14.4px;color:#222;font-weight:normal;font-style:normal;white-space:nowrap;transform:translateX(-50%);transform-origin:50% 50%;">7</div>
<div style="position:absolute;left:3px;top:415px;width:25px;height:1px;background:#ababab;"></div>
<div style="position:absolute;left:15.5px;top:399.7px;font-size:12px;line-height:14.4px;color:#222;font-weight:normal;font-style:normal;white-space:nowrap;transform:translateX(-50%);transform-origin:50% 50%;">8</div>
<div style="position:absolute;left:3px;top:439px;width:25px;height:1px;background:#ababab;"></div>
<div style="position:absolute;left:15.5px;top:423.7px;font-size:12px;line-height:14.4px;color:#222;font-weight:normal;font-style:normal;white-space:nowrap;transform:translateX(-50%);transform-origin:50% 50%;">9</div>
<div style="position:absolute;left:3px;top:463px;width:25px;height:1px;background:#ababab;"></div>
<div style="position:absolute;left:15.5px;top:447.7px;font-size:12px;line-height:14.4px;color:#222;font-weight:normal;font-style:normal;white-space:nowrap;transform:translateX(-50%);transform-origin:50% 50%;">10</div>
<div style="position:absolute;left:3px;top:487px;width:25px;height:1px;background:#ababab;"></div>
<div style="position:absolute;left:15.5px;top:471.7px;font-size:12px;line-height:14.4px;color:#222;font-weight:normal;font-style:normal;white-space:nowrap;transform:translateX(-50%);transform-origin:50% 50%;">11</div>
<div style="position:absolute;left:3px;top:511px;width:25px;height:1px;background:#ababab;"></div>
<div style="position:absolute;left:15.5px;top:495.7px;font-size:12px;line-height:14.4px;color:#222;font-weight:normal;font-style:normal;white-space:nowrap;transform:translateX(-50%);transform-origin:50% 50%;">12</div>
<div style="position:absolute;left:3px;top:535px;width:25px;height:1px;background:#ababab;"></div>
<div style="position:absolute;left:3px;top:512px;width:25px;height:23px;background:#d2d2d2;"></div>
<div style="position:absolute;left:27px;top:512px;width:2px;height:24px;background:#217346;"></div>
<div style="position:absolute;left:15.5px;top:519.7px;font-size:12px;line-height:14.4px;color:#217346;font-weight:normal;font-style:normal;white-space:nowrap;transform:translateX(-50%);transform-origin:50% 50%;">13</div>
<div style="position:absolute;left:3px;top:559px;width:25px;height:1px;background:#ababab;"></div>
<div style="position:absolute;left:15.5px;top:543.7px;font-size:12px;line-height:14.4px;color:#222;font-weight:normal;font-style:normal;white-space:nowrap;transform:translateX(-50%);transform-origin:50% 50%;">14</div>
<div style="position:absolute;left:3px;top:583px;width:25px;height:1px;background:#ababab;"></div>
<div style="position:absolute;left:15.5px;top:567.7px;font-size:12px;line-height:14.4px;color:#222;font-weight:normal;font-style:normal;white-space:nowrap;transform:translateX(-50%);transform-origin:50% 50%;">15</div>
<div style="position:absolute;left:3px;top:607px;width:25px;height:1px;background:#ababab;"></div>
<div style="position:absolute;left:15.5px;top:591.7px;font-size:12px;line-height:14.4px;color:#222;font-weight:normal;font-style:normal;white-space:nowrap;transform:translateX(-50%);transform-origin:50% 50%;">16</div>
<div style="position:absolute;left:3px;top:631px;width:25px;height:1px;background:#ababab;"></div>
<div style="position:absolute;left:15.5px;top:615.7px;font-size:12px;line-height:14.4px;color:#222;font-weight:normal;font-style:normal;white-space:nowrap;transform:translateX(-50%);transform-origin:50% 50%;">17</div>
<div style="position:absolute;left:3px;top:655px;width:25px;height:1px;background:#ababab;"></div>
<div style="position:absolute;left:15.5px;top:639.7px;font-size:12px;line-height:14.4px;color:#222;font-weight:normal;font-style:normal;white-space:nowrap;transform:translateX(-50%);transform-origin:50% 50%;">18</div>
<div style="position:absolute;left:3px;top:679px;width:25px;height:1px;background:#ababab;"></div>
<div style="position:absolute;left:15.5px;top:663.7px;font-size:12px;line-height:14.4px;color:#222;font-weight:normal;font-style:normal;white-space:nowrap;transform:translateX(-50%);transform-origin:50% 50%;">19</div>
<div style="position:absolute;left:3px;top:703px;width:25px;height:1px;background:#ababab;"></div>
<div style="position:absolute;left:15.5px;top:687.7px;font-size:12px;line-height:14.4px;color:#222;font-weight:normal;font-style:normal;white-space:nowrap;transform:translateX(-50%);transform-origin:50% 50%;">20</div>
<div style="position:absolute;left:3px;top:736px;width:25px;height:1px;background:#ababab;"></div>
<div style="position:absolute;left:15.5px;top:720.7px;font-size:12px;line-height:14.4px;color:#222;font-weight:normal;font-style:normal;white-space:nowrap;transform:translateX(-50%);transform-origin:50% 50%;">21</div>
<div style="position:absolute;left:3px;top:768px;width:25px;height:1px;background:#ababab;"></div>
<div style="position:absolute;left:15.5px;top:752.7px;font-size:12px;line-height:14.4px;color:#222;font-weight:normal;font-style:normal;white-space:nowrap;transform:translateX(-50%);transform-origin:50% 50%;">22</div>
<div style="position:absolute;left:3px;top:792px;width:25px;height:1px;background:#ababab;"></div>
<div style="position:absolute;left:15.5px;top:776.7px;font-size:12px;line-height:14.4px;color:#222;font-weight:normal;font-style:normal;white-space:nowrap;transform:translateX(-50%);transform-origin:50% 50%;">47</div>
<div style="position:absolute;left:3px;top:816px;width:25px;height:1px;background:#ababab;"></div>
<div style="position:absolute;left:15.5px;top:800.7px;font-size:12px;line-height:14.4px;color:#222;font-weight:normal;font-style:normal;white-space:nowrap;transform:translateX(-50%);transform-origin:50% 50%;">48</div>
<div style="position:absolute;left:3px;top:840px;width:25px;height:1px;background:#ababab;"></div>
<div style="position:absolute;left:15.5px;top:824.7px;font-size:12px;line-height:14.4px;color:#222;font-weight:normal;font-style:normal;white-space:nowrap;transform:translateX(-50%);transform-origin:50% 50%;">49</div>
<div style="position:absolute;left:3px;top:864px;width:25px;height:1px;background:#ababab;"></div>
<div style="position:absolute;left:15.5px;top:848.7px;font-size:12px;line-height:14.4px;color:#222;font-weight:normal;font-style:normal;white-space:nowrap;transform:translateX(-50%);transform-origin:50% 50%;">50</div>
<div style="position:absolute;left:3px;top:888px;width:25px;height:1px;background:#ababab;"></div>
<div style="position:absolute;left:15.5px;top:872.7px;font-size:12px;line-height:14.4px;color:#222;font-weight:normal;font-style:normal;white-space:nowrap;transform:translateX(-50%);transform-origin:50% 50%;">51</div>
<div style="position:absolute;left:3px;top:912px;width:25px;height:1px;background:#ababab;"></div>
<div style="position:absolute;left:15.5px;top:896.7px;font-size:12px;line-height:14.4px;color:#222;font-weight:normal;font-style:normal;white-space:nowrap;transform:translateX(-50%);transform-origin:50% 50%;">52</div>
<div style="position:absolute;left:3px;top:936px;width:25px;height:1px;background:#ababab;"></div>
<div style="position:absolute;left:15.5px;top:920.7px;font-size:12px;line-height:14.4px;color:#222;font-weight:normal;font-style:normal;white-space:nowrap;transform:translateX(-50%);transform-origin:50% 50%;">53</div>
<div style="position:absolute;left:3px;top:960px;width:25px;height:1px;background:#ababab;"></div>
<div style="position:absolute;left:15.5px;top:944.7px;font-size:12px;line-height:14.4px;color:#222;font-weight:normal;font-style:normal;white-space:nowrap;transform:translateX(-50%);transform-origin:50% 50%;">54</div>
<div style="position:absolute;left:3px;top:984px;width:25px;height:1px;background:#ababab;"></div>
<div style="position:absolute;left:15.5px;top:968.7px;font-size:12px;line-height:14.4px;color:#222;font-weight:normal;font-style:normal;white-space:nowrap;transform:translateX(-50%);transform-origin:50% 50%;">55</div>
<div style="position:absolute;left:29px;top:224px;width:1869px;height:757px;background:#fff;"></div>
<div style="position:absolute;left:1583px;top:247px;width:315px;height:1px;background:#d9d9d9;"></div>
<div style="position:absolute;left:1583px;top:271px;width:315px;height:1px;background:#d9d9d9;"></div>
<div style="position:absolute;left:1583px;top:295px;width:315px;height:1px;background:#d9d9d9;"></div>
<div style="position:absolute;left:1583px;top:319px;width:315px;height:1px;background:#d9d9d9;"></div>
<div style="position:absolute;left:1583px;top:343px;width:315px;height:1px;background:#d9d9d9;"></div>
<div style="position:absolute;left:1583px;top:367px;width:315px;height:1px;background:#d9d9d9;"></div>
<div style="position:absolute;left:1583px;top:391px;width:315px;height:1px;background:#d9d9d9;"></div>
<div style="position:absolute;left:1583px;top:415px;width:315px;height:1px;background:#d9d9d9;"></div>
<div style="position:absolute;left:1583px;top:439px;width:315px;height:1px;background:#d9d9d9;"></div>
<div style="position:absolute;left:1583px;top:463px;width:315px;height:1px;background:#d9d9d9;"></div>
<div style="position:absolute;left:1583px;top:487px;width:315px;height:1px;background:#d9d9d9;"></div>
<div style="position:absolute;left:1583px;top:511px;width:315px;height:1px;background:#d9d9d9;"></div>
<div style="position:absolute;left:1583px;top:535px;width:315px;height:1px;background:#d9d9d9;"></div>
<div style="position:absolute;left:1583px;top:559px;width:315px;height:1px;background:#d9d9d9;"></div>
<div style="position:absolute;left:1583px;top:583px;width:315px;height:1px;background:#d9d9d9;"></div>
<div style="position:absolute;left:1583px;top:607px;width:315px;height:1px;background:#d9d9d9;"></div>
<div style="position:absolute;left:1583px;top:631px;width:315px;height:1px;background:#d9d9d9;"></div>
<div style="position:absolute;left:1583px;top:655px;width:315px;height:1px;background:#d9d9d9;"></div>
<div style="position:absolute;left:1583px;top:679px;width:315px;height:1px;background:#d9d9d9;"></div>
<div style="position:absolute;left:1583px;top:703px;width:315px;height:1px;background:#d9d9d9;"></div>
<div style="position:absolute;left:1583px;top:736px;width:315px;height:1px;background:#d9d9d9;"></div>
<div style="position:absolute;left:1583px;top:768px;width:315px;height:1px;background:#d9d9d9;"></div>
<div style="position:absolute;left:1583px;top:792px;width:315px;height:1px;background:#d9d9d9;"></div>
<div style="position:absolute;left:1583px;top:816px;width:315px;height:1px;background:#d9d9d9;"></div>
<div style="position:absolute;left:1583px;top:840px;width:315px;height:1px;background:#d9d9d9;"></div>
<div style="position:absolute;left:1583px;top:864px;width:315px;height:1px;background:#d9d9d9;"></div>
<div style="position:absolute;left:1583px;top:888px;width:315px;height:1px;background:#d9d9d9;"></div>
<div style="position:absolute;left:1583px;top:912px;width:315px;height:1px;background:#d9d9d9;"></div>
<div style="position:absolute;left:1583px;top:936px;width:315px;height:1px;background:#d9d9d9;"></div>
<div style="position:absolute;left:1583px;top:960px;width:315px;height:1px;background:#d9d9d9;"></div>
<div style="position:absolute;left:1583px;top:984px;width:315px;height:1px;background:#d9d9d9;"></div>
<div style="position:absolute;left:1583px;top:224px;width:1px;height:757px;background:#d9d9d9;"></div>
<div style="position:absolute;left:1647px;top:224px;width:1px;height:757px;background:#d9d9d9;"></div>
<div style="position:absolute;left:1711px;top:224px;width:1px;height:757px;background:#d9d9d9;"></div>
<div style="position:absolute;left:1775px;top:224px;width:1px;height:757px;background:#d9d9d9;"></div>
<div style="position:absolute;left:1839px;top:224px;width:1px;height:757px;background:#d9d9d9;"></div>
<div style="position:absolute;left:29px;top:936px;width:1554px;height:1px;background:#d9d9d9;"></div>
<div style="position:absolute;left:29px;top:960px;width:1554px;height:1px;background:#d9d9d9;"></div>
<div style="position:absolute;left:29px;top:984px;width:1554px;height:1px;background:#d9d9d9;"></div>
<div style="position:absolute;left:68px;top:912px;width:1px;height:69px;background:#d9d9d9;"></div>
<div style="position:absolute;left:157px;top:912px;width:1px;height:69px;background:#d9d9d9;"></div>
<div style="position:absolute;left:260px;top:912px;width:1px;height:69px;background:#d9d9d9;"></div>
<div style="position:absolute;left:493px;top:912px;width:1px;height:69px;background:#d9d9d9;"></div>
<div style="position:absolute;left:650px;top:912px;width:1px;height:69px;background:#d9d9d9;"></div>
<div style="position:absolute;left:880px;top:912px;width:1px;height:69px;background:#d9d9d9;"></div>
<div style="position:absolute;left:973px;top:912px;width:1px;height:69px;background:#d9d9d9;"></div>
<div style="position:absolute;left:1104px;top:912px;width:1px;height:69px;background:#d9d9d9;"></div>
<div style="position:absolute;left:1237px;top:912px;width:1px;height:69px;background:#d9d9d9;"></div>
<div style="position:absolute;left:1345px;top:912px;width:1px;height:69px;background:#d9d9d9;"></div>
<div style="position:absolute;left:1453px;top:912px;width:1px;height:69px;background:#d9d9d9;"></div>
<div style="position:absolute;left:1583px;top:912px;width:1px;height:69px;background:#d9d9d9;"></div>
<div style="position:absolute;left:1710px;top:510px;width:67px;height:27px;border:2px solid #217346"></div>
<div style="position:absolute;left:1773px;top:533px;width:6px;height:6px;background:#217346;border:1px solid #fff"></div>
<div style="position:absolute;left:29px;top:704px;width:1554px;height:1px;background:#4472c4;"></div>
<div style="position:absolute;left:29px;top:705px;width:1554px;height:31px;background:#002060;"></div>
<div style="position:absolute;left:541.81px;top:710.50px;font-size:16.81px;line-height:20.17px;color:#fff;font-weight:bold;font-style:normal;white-space:nowrap;transform:scaleX(1.0020);transform-origin:0 0">Rekapitulasi Replacement Part (All Customer) - Periode 2024-2025</div>
<div style="position:absolute;left:29px;top:736px;width:1554px;height:1px;background:#fff;"></div>
<div style="position:absolute;left:29px;top:737px;width:1554px;height:31px;background:#002060;"></div>
<div style="position:absolute;left:68px;top:737px;width:1px;height:31px;background:#fff;"></div>
<div style="position:absolute;left:157px;top:737px;width:1px;height:31px;background:#fff;"></div>
<div style="position:absolute;left:260px;top:737px;width:1px;height:31px;background:#fff;"></div>
<div style="position:absolute;left:493px;top:737px;width:1px;height:31px;background:#fff;"></div>
<div style="position:absolute;left:650px;top:737px;width:1px;height:31px;background:#fff;"></div>
<div style="position:absolute;left:880px;top:737px;width:1px;height:31px;background:#fff;"></div>
<div style="position:absolute;left:973px;top:737px;width:1px;height:31px;background:#fff;"></div>
<div style="position:absolute;left:1104px;top:737px;width:1px;height:31px;background:#fff;"></div>
<div style="position:absolute;left:1237px;top:737px;width:1px;height:31px;background:#fff;"></div>
<div style="position:absolute;left:1345px;top:737px;width:1px;height:31px;background:#fff;"></div>
<div style="position:absolute;left:1453px;top:737px;width:1px;height:31px;background:#fff;"></div>
<div style="position:absolute;left:29px;top:737px;width:39px;height:31px;overflow:hidden">
<div style="position:absolute;left:7.34px;top:7.03px;font-size:16.67px;line-height:20.00px;color:#fff;font-weight:bold;font-style:normal;white-space:nowrap;transform:scaleX(0.9750);transform-origin:0 0">No</div>
</div>
<div style="position:absolute;left:69px;top:737px;width:88px;height:31px;overflow:hidden">
<div style="position:absolute;left:5.24px;top:7.03px;font-size:16.67px;line-height:20.00px;color:#fff;font-weight:bold;font-style:normal;white-space:nowrap;transform:scaleX(0.9750);transform-origin:0 0">Kode Part</div>
</div>
<div style="position:absolute;left:158px;top:737px;width:102px;height:31px;overflow:hidden">
<div style="position:absolute;left:18.68px;top:7.03px;font-size:16.67px;line-height:20.00px;color:#fff;font-weight:bold;font-style:normal;white-space:nowrap;transform:scaleX(1.0378);transform-origin:0 0">Part No.</div>
</div>
<div style="position:absolute;left:261px;top:737px;width:232px;height:31px;overflow:hidden">
<div style="position:absolute;left:73.79px;top:7.03px;font-size:16.67px;line-height:20.00px;color:#fff;font-weight:bold;font-style:normal;white-space:nowrap;transform:scaleX(1.0217);transform-origin:0 0">Part Name</div>
</div>
<div style="position:absolute;left:494px;top:737px;width:156px;height:31px;overflow:hidden">
<div style="position:absolute;left:26.18px;top:7.03px;font-size:16.67px;line-height:20.00px;color:#fff;font-weight:bold;font-style:normal;white-space:nowrap;transform:scaleX(1.0322);transform-origin:0 0">Reject Name</div>
</div>
<div style="position:absolute;left:651px;top:737px;width:229px;height:31px;overflow:hidden">
<div style="position:absolute;left:75.74px;top:7.03px;font-size:16.67px;line-height:20.00px;color:#fff;font-weight:bold;font-style:normal;white-space:nowrap;transform:scaleX(0.9920);transform-origin:0 0">Customer</div>
</div>
<div style="position:absolute;left:881px;top:737px;width:92px;height:31px;overflow:hidden">
<div style="position:absolute;left:10.65px;top:7.03px;font-size:16.67px;line-height:20.00px;color:#fff;font-weight:bold;font-style:normal;white-space:nowrap;transform:scaleX(0.9750);transform-origin:0 0">Qty (Pcs)</div>
</div>
<div style="position:absolute;left:974px;top:737px;width:130px;height:31px;overflow:hidden">
<div style="position:absolute;left:30.34px;top:7.03px;font-size:16.67px;line-height:20.00px;color:#fff;font-weight:bold;font-style:normal;white-space:nowrap;transform:scaleX(0.9545);transform-origin:0 0">Tgl Tukar</div>
</div>
<div style="position:absolute;left:1105px;top:737px;width:132px;height:31px;overflow:hidden">
<div style="position:absolute;left:32.84px;top:7.03px;font-size:16.67px;line-height:20.00px;color:#fff;font-weight:bold;font-style:normal;white-space:nowrap;transform:scaleX(0.9468);transform-origin:0 0">Tgl Kirim</div>
</div>
<div style="position:absolute;left:1238px;top:737px;width:107px;height:31px;overflow:hidden">
<div style="position:absolute;left:40.08px;top:7.03px;font-size:16.67px;line-height:20.00px;color:#fff;font-weight:bold;font-style:normal;white-space:nowrap;transform:scaleX(0.9410);transform-origin:0 0">PIC</div>
</div>
<div style="position:absolute;left:1346px;top:737px;width:107px;height:31px;overflow:hidden">
<div style="position:absolute;left:28.90px;top:7.03px;font-size:16.67px;line-height:20.00px;color:#fff;font-weight:bold;font-style:normal;white-space:nowrap;transform:scaleX(0.9930);transform-origin:0 0">Status</div>
</div>
<div style="position:absolute;left:1454px;top:737px;width:129px;height:31px;overflow:hidden">
<div style="position:absolute;left:33.62px;top:7.03px;font-size:16.67px;line-height:20.00px;color:#fff;font-weight:bold;font-style:normal;white-space:nowrap;transform:scaleX(1.0149);transform-origin:0 0">Catatan</div>
</div>
<div style="position:absolute;left:51px;top:750px;width:17px;height:17px;background:linear-gradient(#fdfdfd,#eaecef);border:1px solid #c4c4c4"><svg width="15" height="15" style="position:absolute;left:0;top:0"><path d="M3.5 6 h8 l-4 4z" fill="#6a6a6a"/></svg></div>
<div style="position:absolute;left:140px;top:750px;width:17px;height:17px;background:linear-gradient(#fdfdfd,#eaecef);border:1px solid #c4c4c4"><svg width="15" height="15" style="position:absolute;left:0;top:0"><path d="M3.5 6 h8 l-4 4z" fill="#6a6a6a"/></svg></div>
<div style="position:absolute;left:243px;top:750px;width:17px;height:17px;background:linear-gradient(#fdfdfd,#eaecef);border:1px solid #c4c4c4"><svg width="15" height="15" style="position:absolute;left:0;top:0"><path d="M3.5 6 h8 l-4 4z" fill="#6a6a6a"/></svg></div>
<div style="position:absolute;left:476px;top:750px;width:17px;height:17px;background:linear-gradient(#fdfdfd,#eaecef);border:1px solid #c4c4c4"><svg width="15" height="15" style="position:absolute;left:0;top:0"><path d="M3.5 6 h8 l-4 4z" fill="#6a6a6a"/></svg></div>
<div style="position:absolute;left:633px;top:750px;width:17px;height:17px;background:linear-gradient(#fdfdfd,#eaecef);border:1px solid #c4c4c4"><svg width="15" height="15" style="position:absolute;left:0;top:0"><path d="M3.5 6 h8 l-4 4z" fill="#6a6a6a"/></svg></div>
<div style="position:absolute;left:863px;top:750px;width:17px;height:17px;background:linear-gradient(#fdfdfd,#eaecef);border:1px solid #c4c4c4"><svg width="15" height="15" style="position:absolute;left:0;top:0"><path d="M3.5 6 h8 l-4 4z" fill="#6a6a6a"/></svg></div>
<div style="position:absolute;left:956px;top:750px;width:17px;height:17px;background:linear-gradient(#fdfdfd,#eaecef);border:1px solid #c4c4c4"><svg width="15" height="15" style="position:absolute;left:0;top:0"><path d="M3.5 6 h8 l-4 4z" fill="#6a6a6a"/></svg></div>
<div style="position:absolute;left:1087px;top:750px;width:17px;height:17px;background:linear-gradient(#fdfdfd,#eaecef);border:1px solid #c4c4c4"><svg width="15" height="15" style="position:absolute;left:0;top:0"><path d="M3.5 6 h8 l-4 4z" fill="#6a6a6a"/></svg></div>
<div style="position:absolute;left:1220px;top:750px;width:17px;height:17px;background:linear-gradient(#fdfdfd,#eaecef);border:1px solid #c4c4c4"><svg width="15" height="15" style="position:absolute;left:0;top:0"><path d="M3.5 6 h8 l-4 4z" fill="#6a6a6a"/></svg></div>
<div style="position:absolute;left:1328px;top:750px;width:17px;height:17px;background:linear-gradient(#fdfdfd,#eaecef);border:1px solid #c4c4c4"><svg width="15" height="15" style="position:absolute;left:0;top:0"><path d="M3.5 6 h8 l-4 4z" fill="#6a6a6a"/></svg></div>
<div style="position:absolute;left:1436px;top:750px;width:17px;height:17px;background:linear-gradient(#fdfdfd,#eaecef);border:1px solid #c4c4c4"><svg width="15" height="15" style="position:absolute;left:0;top:0"><path d="M3.5 6 h8 l-4 4z" fill="#6a6a6a"/></svg></div>
<div style="position:absolute;left:1566px;top:750px;width:17px;height:17px;background:linear-gradient(#fdfdfd,#eaecef);border:1px solid #c4c4c4"><svg width="15" height="15" style="position:absolute;left:0;top:0"><path d="M3.5 6 h8 l-4 4z" fill="#6a6a6a"/></svg></div>
<div style="position:absolute;left:29px;top:769px;width:39px;height:23px;color:#000;font-size:15px;line-height:23px;text-align:center;white-space:nowrap"><span style="display:inline-block;transform:scaleX(1.04)">25</span></div>
<div style="position:absolute;left:69px;top:769px;width:88px;height:23px;color:#000;font-size:15px;line-height:23px;text-align:center;white-space:nowrap"><span style="display:inline-block;transform:scaleX(0.95)">Kd D</span></div>
<div style="position:absolute;left:158px;top:769px;width:102px;height:23px;color:#000;font-size:15px;line-height:23px;text-align:center;white-space:nowrap"><span style="display:inline-block;transform:scaleX(1.04)">12348</span></div>
<div style="position:absolute;left:261px;top:769px;width:232px;height:23px;color:#000;font-size:15px;line-height:23px;text-align:center;white-space:nowrap"><span style="display:inline-block;transform:scaleX(0.95)">Prod D Unit Mirror</span></div>
<div style="position:absolute;left:494px;top:769px;width:156px;height:23px;color:#000;font-size:15px;line-height:23px;text-align:center;white-space:nowrap"><span style="display:inline-block;transform:scaleX(0.95)">Housing Crack</span></div>
<div style="position:absolute;left:651px;top:769px;width:229px;height:23px;color:#000;font-size:15px;line-height:23px;text-align:center;white-space:nowrap"><span style="display:inline-block;transform:scaleX(0.95)">Customer D</span></div>
<div style="position:absolute;left:881px;top:769px;width:92px;height:23px;color:#000;font-size:15px;line-height:23px;text-align:center;white-space:nowrap"><span style="display:inline-block;transform:scaleX(1.04)">1</span></div>
<div style="position:absolute;left:974px;top:769px;width:130px;height:23px;color:#000;font-size:15px;line-height:23px;text-align:center;white-space:nowrap"><span style="display:inline-block;transform:scaleX(1.04)">25/04/2025</span></div>
<div style="position:absolute;left:1105px;top:769px;width:132px;height:23px;color:#000;font-size:15px;line-height:23px;text-align:center;white-space:nowrap"><span style="display:inline-block;transform:scaleX(1.04)">26/04/2025</span></div>
<div style="position:absolute;left:1238px;top:769px;width:107px;height:23px;color:#000;font-size:15px;line-height:23px;text-align:center;white-space:nowrap"><span style="display:inline-block;transform:scaleX(0.95)">Wildan</span></div>
<div style="position:absolute;left:1346px;top:769px;width:107px;height:23px;color:#000;font-size:15px;line-height:23px;text-align:center;white-space:nowrap"><span style="display:inline-block;transform:scaleX(0.95)">Scrap</span></div>
<div style="position:absolute;left:1454px;top:769px;width:129px;height:23px;color:#000;font-size:15px;line-height:23px;text-align:center;white-space:nowrap"><span style="display:inline-block;transform:scaleX(0.95)">Close</span></div>
<div style="position:absolute;left:29px;top:793px;width:39px;height:23px;color:#000;font-size:15px;line-height:23px;text-align:center;white-space:nowrap"><span style="display:inline-block;transform:scaleX(1.04)">26</span></div>
<div style="position:absolute;left:69px;top:793px;width:88px;height:23px;color:#000;font-size:15px;line-height:23px;text-align:center;white-space:nowrap"><span style="display:inline-block;transform:scaleX(0.95)">Kd C</span></div>
<div style="position:absolute;left:158px;top:793px;width:102px;height:23px;color:#000;font-size:15px;line-height:23px;text-align:center;white-space:nowrap"><span style="display:inline-block;transform:scaleX(1.04)">12347</span></div>
<div style="position:absolute;left:261px;top:793px;width:232px;height:23px;color:#000;font-size:15px;line-height:23px;text-align:center;white-space:nowrap"><span style="display:inline-block;transform:scaleX(0.95)">Prod C Unit Rear Lamp</span></div>
<div style="position:absolute;left:494px;top:793px;width:156px;height:23px;color:#000;font-size:15px;line-height:23px;text-align:center;white-space:nowrap"><span style="display:inline-block;transform:scaleX(0.95)">Bulb Lamp Crack</span></div>
<div style="position:absolute;left:651px;top:793px;width:229px;height:23px;color:#000;font-size:15px;line-height:23px;text-align:center;white-space:nowrap"><span style="display:inline-block;transform:scaleX(0.95)">Customer C</span></div>
<div style="position:absolute;left:881px;top:793px;width:92px;height:23px;color:#000;font-size:15px;line-height:23px;text-align:center;white-space:nowrap"><span style="display:inline-block;transform:scaleX(1.04)">3</span></div>
<div style="position:absolute;left:974px;top:793px;width:130px;height:23px;color:#000;font-size:15px;line-height:23px;text-align:center;white-space:nowrap"><span style="display:inline-block;transform:scaleX(1.04)">13/04/2025</span></div>
<div style="position:absolute;left:1105px;top:793px;width:132px;height:23px;color:#000;font-size:15px;line-height:23px;text-align:center;white-space:nowrap"><span style="display:inline-block;transform:scaleX(1.04)">14/04/2025</span></div>
<div style="position:absolute;left:1238px;top:793px;width:107px;height:23px;color:#000;font-size:15px;line-height:23px;text-align:center;white-space:nowrap"><span style="display:inline-block;transform:scaleX(0.95)">Wildan</span></div>
<div style="position:absolute;left:1346px;top:793px;width:107px;height:23px;color:#000;font-size:15px;line-height:23px;text-align:center;white-space:nowrap"><span style="display:inline-block;transform:scaleX(0.95)">Repair</span></div>
<div style="position:absolute;left:1454px;top:793px;width:129px;height:23px;color:#000;font-size:15px;line-height:23px;text-align:center;white-space:nowrap"><span style="display:inline-block;transform:scaleX(0.95)">Close</span></div>
<div style="position:absolute;left:29px;top:817px;width:39px;height:23px;color:#000;font-size:15px;line-height:23px;text-align:center;white-space:nowrap"><span style="display:inline-block;transform:scaleX(1.04)">27</span></div>
<div style="position:absolute;left:69px;top:817px;width:88px;height:23px;color:#000;font-size:15px;line-height:23px;text-align:center;white-space:nowrap"><span style="display:inline-block;transform:scaleX(0.95)">Kd A</span></div>
<div style="position:absolute;left:158px;top:817px;width:102px;height:23px;color:#000;font-size:15px;line-height:23px;text-align:center;white-space:nowrap"><span style="display:inline-block;transform:scaleX(1.04)">12345</span></div>
<div style="position:absolute;left:261px;top:817px;width:232px;height:23px;color:#000;font-size:15px;line-height:23px;text-align:center;white-space:nowrap"><span style="display:inline-block;transform:scaleX(0.95)">Prod A Unit Axle</span></div>
<div style="position:absolute;left:494px;top:817px;width:156px;height:23px;color:#000;font-size:15px;line-height:23px;text-align:center;white-space:nowrap"><span style="display:inline-block;transform:scaleX(0.95)">Gear Damage</span></div>
<div style="position:absolute;left:651px;top:817px;width:229px;height:23px;color:#000;font-size:15px;line-height:23px;text-align:center;white-space:nowrap"><span style="display:inline-block;transform:scaleX(0.95)">Customer A</span></div>
<div style="position:absolute;left:881px;top:817px;width:92px;height:23px;color:#000;font-size:15px;line-height:23px;text-align:center;white-space:nowrap"><span style="display:inline-block;transform:scaleX(1.04)">2</span></div>
<div style="position:absolute;left:974px;top:817px;width:130px;height:23px;color:#000;font-size:15px;line-height:23px;text-align:center;white-space:nowrap"><span style="display:inline-block;transform:scaleX(1.04)">06/05/2025</span></div>
<div style="position:absolute;left:1105px;top:817px;width:132px;height:23px;color:#000;font-size:15px;line-height:23px;text-align:center;white-space:nowrap"><span style="display:inline-block;transform:scaleX(1.04)">07/05/2025</span></div>
<div style="position:absolute;left:1238px;top:817px;width:107px;height:23px;color:#000;font-size:15px;line-height:23px;text-align:center;white-space:nowrap"><span style="display:inline-block;transform:scaleX(0.95)">Wildan</span></div>
<div style="position:absolute;left:1346px;top:817px;width:107px;height:23px;color:#000;font-size:15px;line-height:23px;text-align:center;white-space:nowrap"><span style="display:inline-block;transform:scaleX(0.95)">Scrap</span></div>
<div style="position:absolute;left:1454px;top:817px;width:129px;height:23px;color:#000;font-size:15px;line-height:23px;text-align:center;white-space:nowrap"><span style="display:inline-block;transform:scaleX(0.95)">Close</span></div>
<div style="position:absolute;left:29px;top:841px;width:39px;height:23px;color:#000;font-size:15px;line-height:23px;text-align:center;white-space:nowrap"><span style="display:inline-block;transform:scaleX(1.04)">28</span></div>
<div style="position:absolute;left:69px;top:841px;width:88px;height:23px;color:#000;font-size:15px;line-height:23px;text-align:center;white-space:nowrap"><span style="display:inline-block;transform:scaleX(0.95)">Kd C</span></div>
<div style="position:absolute;left:158px;top:841px;width:102px;height:23px;color:#000;font-size:15px;line-height:23px;text-align:center;white-space:nowrap"><span style="display:inline-block;transform:scaleX(1.04)">12347</span></div>
<div style="position:absolute;left:261px;top:841px;width:232px;height:23px;color:#000;font-size:15px;line-height:23px;text-align:center;white-space:nowrap"><span style="display:inline-block;transform:scaleX(0.95)">Prod C Unit Rear Lamp</span></div>
<div style="position:absolute;left:494px;top:841px;width:156px;height:23px;color:#000;font-size:15px;line-height:23px;text-align:center;white-space:nowrap"><span style="display:inline-block;transform:scaleX(0.95)">Lens Scratch</span></div>
<div style="position:absolute;left:651px;top:841px;width:229px;height:23px;color:#000;font-size:15px;line-height:23px;text-align:center;white-space:nowrap"><span style="display:inline-block;transform:scaleX(0.95)">Customer C</span></div>
<div style="position:absolute;left:881px;top:841px;width:92px;height:23px;color:#000;font-size:15px;line-height:23px;text-align:center;white-space:nowrap"><span style="display:inline-block;transform:scaleX(1.04)">3</span></div>
<div style="position:absolute;left:974px;top:841px;width:130px;height:23px;color:#000;font-size:15px;line-height:23px;text-align:center;white-space:nowrap"><span style="display:inline-block;transform:scaleX(1.04)">16/05/2025</span></div>
<div style="position:absolute;left:1105px;top:841px;width:132px;height:23px;color:#000;font-size:15px;line-height:23px;text-align:center;white-space:nowrap"><span style="display:inline-block;transform:scaleX(1.04)">17/05/2025</span></div>
<div style="position:absolute;left:1238px;top:841px;width:107px;height:23px;color:#000;font-size:15px;line-height:23px;text-align:center;white-space:nowrap"><span style="display:inline-block;transform:scaleX(0.95)">Wildan</span></div>
<div style="position:absolute;left:1346px;top:841px;width:107px;height:23px;color:#000;font-size:15px;line-height:23px;text-align:center;white-space:nowrap"><span style="display:inline-block;transform:scaleX(0.95)">Sparepart</span></div>
<div style="position:absolute;left:1454px;top:841px;width:129px;height:23px;color:#000;font-size:15px;line-height:23px;text-align:center;white-space:nowrap"><span style="display:inline-block;transform:scaleX(0.95)">Open</span></div>
<div style="position:absolute;left:29px;top:865px;width:39px;height:23px;color:#000;font-size:15px;line-height:23px;text-align:center;white-space:nowrap"><span style="display:inline-block;transform:scaleX(1.04)">29</span></div>
<div style="position:absolute;left:69px;top:865px;width:88px;height:23px;color:#000;font-size:15px;line-height:23px;text-align:center;white-space:nowrap"><span style="display:inline-block;transform:scaleX(0.95)">Kd D</span></div>
<div style="position:absolute;left:158px;top:865px;width:102px;height:23px;color:#000;font-size:15px;line-height:23px;text-align:center;white-space:nowrap"><span style="display:inline-block;transform:scaleX(1.04)">12348</span></div>
<div style="position:absolute;left:261px;top:865px;width:232px;height:23px;color:#000;font-size:15px;line-height:23px;text-align:center;white-space:nowrap"><span style="display:inline-block;transform:scaleX(0.95)">Prod D Unit Mirror</span></div>
<div style="position:absolute;left:494px;top:865px;width:156px;height:23px;color:#000;font-size:15px;line-height:23px;text-align:center;white-space:nowrap"><span style="display:inline-block;transform:scaleX(0.95)">Housing Crack</span></div>
<div style="position:absolute;left:651px;top:865px;width:229px;height:23px;color:#000;font-size:15px;line-height:23px;text-align:center;white-space:nowrap"><span style="display:inline-block;transform:scaleX(0.95)">Customer D</span></div>
<div style="position:absolute;left:881px;top:865px;width:92px;height:23px;color:#000;font-size:15px;line-height:23px;text-align:center;white-space:nowrap"><span style="display:inline-block;transform:scaleX(1.04)">2</span></div>
<div style="position:absolute;left:974px;top:865px;width:130px;height:23px;color:#000;font-size:15px;line-height:23px;text-align:center;white-space:nowrap"><span style="display:inline-block;transform:scaleX(1.04)">10/06/2025</span></div>
<div style="position:absolute;left:1105px;top:865px;width:132px;height:23px;color:#000;font-size:15px;line-height:23px;text-align:center;white-space:nowrap"><span style="display:inline-block;transform:scaleX(1.04)">11/06/2025</span></div>
<div style="position:absolute;left:1238px;top:865px;width:107px;height:23px;color:#000;font-size:15px;line-height:23px;text-align:center;white-space:nowrap"><span style="display:inline-block;transform:scaleX(0.95)">Wildan</span></div>
<div style="position:absolute;left:1346px;top:865px;width:107px;height:23px;color:#000;font-size:15px;line-height:23px;text-align:center;white-space:nowrap"><span style="display:inline-block;transform:scaleX(0.95)">Scrap</span></div>
<div style="position:absolute;left:1454px;top:865px;width:129px;height:23px;color:#000;font-size:15px;line-height:23px;text-align:center;white-space:nowrap"><span style="display:inline-block;transform:scaleX(0.95)">Close</span></div>
<div style="position:absolute;left:29px;top:889px;width:39px;height:23px;color:#000;font-size:15px;line-height:23px;text-align:center;white-space:nowrap"><span style="display:inline-block;transform:scaleX(1.04)">30</span></div>
<div style="position:absolute;left:69px;top:889px;width:88px;height:23px;color:#000;font-size:15px;line-height:23px;text-align:center;white-space:nowrap"><span style="display:inline-block;transform:scaleX(0.95)">Kd A</span></div>
<div style="position:absolute;left:158px;top:889px;width:102px;height:23px;color:#000;font-size:15px;line-height:23px;text-align:center;white-space:nowrap"><span style="display:inline-block;transform:scaleX(1.04)">12345</span></div>
<div style="position:absolute;left:261px;top:889px;width:232px;height:23px;color:#000;font-size:15px;line-height:23px;text-align:center;white-space:nowrap"><span style="display:inline-block;transform:scaleX(0.95)">Prod A Unit Axle</span></div>
<div style="position:absolute;left:494px;top:889px;width:156px;height:23px;color:#000;font-size:15px;line-height:23px;text-align:center;white-space:nowrap"><span style="display:inline-block;transform:scaleX(0.95)">Gear Scratch</span></div>
<div style="position:absolute;left:651px;top:889px;width:229px;height:23px;color:#000;font-size:15px;line-height:23px;text-align:center;white-space:nowrap"><span style="display:inline-block;transform:scaleX(0.95)">Customer A</span></div>
<div style="position:absolute;left:881px;top:889px;width:92px;height:23px;color:#000;font-size:15px;line-height:23px;text-align:center;white-space:nowrap"><span style="display:inline-block;transform:scaleX(1.04)">2</span></div>
<div style="position:absolute;left:974px;top:889px;width:130px;height:23px;color:#000;font-size:15px;line-height:23px;text-align:center;white-space:nowrap"><span style="display:inline-block;transform:scaleX(1.04)">24/06/2025</span></div>
<div style="position:absolute;left:1105px;top:889px;width:132px;height:23px;color:#000;font-size:15px;line-height:23px;text-align:center;white-space:nowrap"><span style="display:inline-block;transform:scaleX(1.04)">25/06/2025</span></div>
<div style="position:absolute;left:1238px;top:889px;width:107px;height:23px;color:#000;font-size:15px;line-height:23px;text-align:center;white-space:nowrap"><span style="display:inline-block;transform:scaleX(0.95)">Wildan</span></div>
<div style="position:absolute;left:1346px;top:889px;width:107px;height:23px;color:#000;font-size:15px;line-height:23px;text-align:center;white-space:nowrap"><span style="display:inline-block;transform:scaleX(0.95)">Sparepart</span></div>
<div style="position:absolute;left:1454px;top:889px;width:129px;height:23px;color:#000;font-size:15px;line-height:23px;text-align:center;white-space:nowrap"><span style="display:inline-block;transform:scaleX(0.95)">Open</span></div>
<div style="position:absolute;left:29px;top:792px;width:1555px;height:1px;background:#000;"></div>
<div style="position:absolute;left:29px;top:816px;width:1555px;height:1px;background:#000;"></div>
<div style="position:absolute;left:29px;top:840px;width:1555px;height:1px;background:#000;"></div>
<div style="position:absolute;left:29px;top:864px;width:1555px;height:1px;background:#000;"></div>
<div style="position:absolute;left:29px;top:888px;width:1555px;height:1px;background:#000;"></div>
<div style="position:absolute;left:29px;top:912px;width:1555px;height:1px;background:#000;"></div>
<div style="position:absolute;left:29px;top:768px;width:1555px;height:1px;background:#000;"></div>
<div style="position:absolute;left:68px;top:768px;width:1px;height:145px;background:#000;"></div>
<div style="position:absolute;left:157px;top:768px;width:1px;height:145px;background:#000;"></div>
<div style="position:absolute;left:260px;top:768px;width:1px;height:145px;background:#000;"></div>
<div style="position:absolute;left:493px;top:768px;width:1px;height:145px;background:#000;"></div>
<div style="position:absolute;left:650px;top:768px;width:1px;height:145px;background:#000;"></div>
<div style="position:absolute;left:880px;top:768px;width:1px;height:145px;background:#000;"></div>
<div style="position:absolute;left:973px;top:768px;width:1px;height:145px;background:#000;"></div>
<div style="position:absolute;left:1104px;top:768px;width:1px;height:145px;background:#000;"></div>
<div style="position:absolute;left:1237px;top:768px;width:1px;height:145px;background:#000;"></div>
<div style="position:absolute;left:1345px;top:768px;width:1px;height:145px;background:#000;"></div>
<div style="position:absolute;left:1453px;top:768px;width:1px;height:145px;background:#000;"></div>
<div style="position:absolute;left:1583px;top:768px;width:1px;height:145px;background:#000;"></div>
<div style="position:absolute;left:1583px;top:224px;width:1px;height:757px;background:#9b9b9b;"></div>
<div style="position:absolute;left:29px;top:768px;width:1869px;height:1px;background:#9b9b9b;"></div>
<div style="position:absolute;left:1897px;top:224px;width:1px;height:757px;background:#9b9b9b;"></div>
<div style="position:absolute;left:3px;top:981px;width:1914px;height:26px;background:#e6e6e6;"></div>
<div style="position:absolute;left:3px;top:981px;width:101px;height:1px;background:#c6c6c6;"></div>
<div style="position:absolute;left:206px;top:981px;width:1692px;height:1px;background:#c6c6c6;"></div>
<div style="position:absolute;left:104px;top:981px;width:102px;height:26px;background:#fff;border-left:1px solid #c6c6c6;border-right:1px solid #c6c6c6"></div>
<div style="position:absolute;left:104px;top:1004px;width:103px;height:3px;background:#217346;"></div>
<div style="position:absolute;left:155px;top:987.2px;font-size:13px;line-height:15.6px;color:#217346;font-weight:bold;font-style:normal;white-space:nowrap;transform:translateX(-50%) scaleX(0.97);transform-origin:50% 50%;">Replacement</div>
<div style="position:absolute;left:236px;top:987.2px;font-size:13px;line-height:15.6px;color:#444;font-weight:normal;font-style:normal;white-space:nowrap;transform:translateX(-50%);transform-origin:50% 50%;">COPQ</div>
<div style="position:absolute;left:266px;top:985px;width:1px;height:20px;background:#aaa;"></div>
<div style="position:absolute;left:289px;top:987.2px;font-size:13px;line-height:15.6px;color:#444;font-weight:normal;font-style:normal;white-space:nowrap;transform:translateX(-50%);transform-origin:50% 50%;">SPC</div>
<div style="position:absolute;left:313px;top:985px;width:1px;height:20px;background:#aaa;"></div>
<div style="position:absolute;left:349px;top:987.2px;font-size:13px;line-height:15.6px;color:#444;font-weight:normal;font-style:normal;white-space:nowrap;transform:translateX(-50%);transform-origin:50% 50%;">Trial N5</div>
<div style="position:absolute;left:385px;top:985px;width:1px;height:20px;background:#aaa;"></div>
<svg style="position:absolute;left:418px;top:986px" width="18" height="18" fill="none" stroke="#666" stroke-width="1.2"><circle cx="9" cy="9" r="7.5"/><path d="M9 5 v8 M5 9 h8" stroke-width="1.6"/></svg>
<svg style="position:absolute;left:28px;top:988px" width="40" height="12"><path d="M7 2 l-4 4 l4 4z" fill="#bbb"/><path d="M33 2 l4 4 l-4 4z" fill="#bbb"/></svg>
<svg style="position:absolute;left:1150px;top:988px" width="5" height="14"><circle cx="2.5" cy="2" r="1" fill="#999"/><circle cx="2.5" cy="7" r="1" fill="#999"/><circle cx="2.5" cy="12" r="1" fill="#999"/></svg>
<div style="position:absolute;left:1169px;top:988px;width:728px;height:15px;background:#dadada;"></div>
<div style="position:absolute;left:1169px;top:988px;width:15px;height:15px;background:#fff;border:1px solid #aaa"></div>
<div style="position:absolute;left:1183px;top:988px;width:18px;height:15px;background:#fff;border:1px solid #aaa"></div>
<div style="position:absolute;left:1883px;top:988px;width:15px;height:15px;background:#fff;border:1px solid #aaa"></div>
<svg style="position:absolute;left:1169px;top:988px" width="15" height="15"><path d="M9 3.5 l-4 4 l4 4z" fill="#555"/></svg>
<svg style="position:absolute;left:1883px;top:988px" width="15" height="15"><path d="M6 3.5 l4 4 l-4 4z" fill="#555"/></svg>
<div style="position:absolute;left:1898px;top:204px;width:19px;height:777px;background:#dadada;"></div>
<div style="position:absolute;left:1901px;top:206px;width:15px;height:15px;background:#fff;border:1px solid #aaa"></div>
<div style="position:absolute;left:1901px;top:780px;width:15px;height:186px;background:#fff;border:1px solid #aaa"></div>
<div style="position:absolute;left:1901px;top:966px;width:15px;height:15px;background:#fff;border:1px solid #aaa"></div>
<svg style="position:absolute;left:1901px;top:206px" width="15" height="15"><path d="M3.5 9.5 l4 -4 l4 4z" fill="#777"/></svg>
<svg style="position:absolute;left:1901px;top:966px" width="15" height="15"><path d="M3.5 5.5 l4 4 l4 -4z" fill="#777"/></svg>
<div style="position:absolute;left:1237px;top:224px;width:1px;height:481px;background:#4472c4;"></div>
<div style="position:absolute;left:29px;top:464px;width:1554px;height:1px;background:#4472c4;"></div>
<div style="position:absolute;left:488.96px;top:235.15px;font-size:13.48px;line-height:16.17px;color:#002060;font-weight:bold;font-style:normal;white-space:nowrap;transform:scaleX(0.9588);transform-origin:0 0">Replacement Part by Periode (Quartal Periode)</div>
<div style="position:absolute;left:801px;top:242px;width:25px;height:6px;background:linear-gradient(to right,#1f3864,#4472c4 60%)"></div>
<div style="position:absolute;left:828.74px;top:238.32px;font-size:10.87px;line-height:13.04px;color:#002060;font-weight:bold;font-style:normal;white-space:nowrap;transform:scaleX(0.9743);transform-origin:0 0">Actual</div>
<svg style="position:absolute;left:870px;top:238px" width="32" height="14"><path d="M1 6.5 h28" stroke="#ed7d31" stroke-width="2.3"/><circle cx="15.5" cy="6.5" r="3.5" fill="#ed7d31"/></svg>
<div style="position:absolute;left:900.89px;top:238.32px;font-size:10.87px;line-height:13.04px;color:#002060;font-weight:bold;font-style:normal;white-space:nowrap;transform:scaleX(0.9946);transform-origin:0 0">Target</div>
<div style="position:absolute;left:53px;top:267px;width:1157px;height:1px;background:#d9d9d9;"></div>
<div style="position:absolute;left:39.6px;top:261.7px;font-size:10.5px;line-height:12.6px;color:#002060;font-weight:bold;font-style:normal;white-space:nowrap;transform:translateX(-50%) scaleX(1.1);transform-origin:50% 50%;">5</div>
<div style="position:absolute;left:1224.8px;top:260.9px;font-size:11px;line-height:13.2px;color:#595959;font-weight:normal;font-style:normal;white-space:nowrap;transform:translateX(-50%) scaleX(1.05);transform-origin:50% 50%;">5</div>
<div style="position:absolute;left:53px;top:295px;width:1157px;height:1px;background:#d9d9d9;"></div>
<div style="position:absolute;left:39.6px;top:289.2px;font-size:10.5px;line-height:12.6px;color:#002060;font-weight:bold;font-style:normal;white-space:nowrap;transform:translateX(-50%) scaleX(1.1);transform-origin:50% 50%;">4</div>
<div style="position:absolute;left:1224.8px;top:288.4px;font-size:11px;line-height:13.2px;color:#595959;font-weight:normal;font-style:normal;white-space:nowrap;transform:translateX(-50%) scaleX(1.05);transform-origin:50% 50%;">4</div>
<div style="position:absolute;left:53px;top:322px;width:1157px;height:1px;background:#d9d9d9;"></div>
<div style="position:absolute;left:39.6px;top:316.7px;font-size:10.5px;line-height:12.6px;color:#002060;font-weight:bold;font-style:normal;white-space:nowrap;transform:translateX(-50%) scaleX(1.1);transform-origin:50% 50%;">3</div>
<div style="position:absolute;left:1224.8px;top:315.9px;font-size:11px;line-height:13.2px;color:#595959;font-weight:normal;font-style:normal;white-space:nowrap;transform:translateX(-50%) scaleX(1.05);transform-origin:50% 50%;">3</div>
<div style="position:absolute;left:53px;top:350px;width:1157px;height:1px;background:#d9d9d9;"></div>
<div style="position:absolute;left:39.6px;top:344.2px;font-size:10.5px;line-height:12.6px;color:#002060;font-weight:bold;font-style:normal;white-space:nowrap;transform:translateX(-50%) scaleX(1.1);transform-origin:50% 50%;">2</div>
<div style="position:absolute;left:1224.8px;top:343.4px;font-size:11px;line-height:13.2px;color:#595959;font-weight:normal;font-style:normal;white-space:nowrap;transform:translateX(-50%) scaleX(1.05);transform-origin:50% 50%;">2</div>
<div style="position:absolute;left:53px;top:378px;width:1157px;height:1px;background:#d9d9d9;"></div>
<div style="position:absolute;left:39.6px;top:371.7px;font-size:10.5px;line-height:12.6px;color:#002060;font-weight:bold;font-style:normal;white-space:nowrap;transform:translateX(-50%) scaleX(1.1);transform-origin:50% 50%;">1</div>
<div style="position:absolute;left:1224.8px;top:370.9px;font-size:11px;line-height:13.2px;color:#595959;font-weight:normal;font-style:normal;white-space:nowrap;transform:translateX(-50%) scaleX(1.05);transform-origin:50% 50%;">1</div>
<div style="position:absolute;left:39.6px;top:399.2px;font-size:10.5px;line-height:12.6px;color:#002060;font-weight:bold;font-style:normal;white-space:nowrap;transform:translateX(-50%) scaleX(1.1);transform-origin:50% 50%;">0</div>
<div style="position:absolute;left:1224.8px;top:398.4px;font-size:11px;line-height:13.2px;color:#595959;font-weight:normal;font-style:normal;white-space:nowrap;transform:translateX(-50%) scaleX(1.05);transform-origin:50% 50%;">0</div>
<div style="position:absolute;left:53px;top:405px;width:1157px;height:1px;background:#d9d9d9;"></div>
<div style="position:absolute;left:53px;top:405px;width:1px;height:48px;background:#d9d9d9;"></div>
<div style="position:absolute;left:676px;top:405px;width:1px;height:48px;background:#d9d9d9;"></div>
<div style="position:absolute;left:1210px;top:405px;width:1px;height:48px;background:#d9d9d9;"></div>
<div style="position:absolute;left:84px;top:323px;width:28px;height:82px;background:linear-gradient(to right,#6b3210 0px,#ed7d31 9px,#ed7d31 100%);box-shadow:inset 0 1.5px 1px -0.5px rgba(0,0,0,0.25),inset -1px 0 1px -0.5px rgba(0,0,0,0.15)"></div>
<div style="position:absolute;left:98.5px;top:303.5px;font-size:11px;line-height:13.2px;color:#002060;font-weight:bold;font-style:normal;white-space:nowrap;transform:translateX(-50%) scaleX(1.1);transform-origin:50% 50%;">3</div>
<div style="position:absolute;left:98px;top:413.6px;font-size:11px;line-height:13.2px;color:#002060;font-weight:bold;font-style:normal;white-space:nowrap;transform:translateX(-50%) scaleX(0.98);transform-origin:50% 50%;">Jun</div>
<div style="position:absolute;left:173px;top:323px;width:28px;height:82px;background:linear-gradient(to right,#6b3210 0px,#ed7d31 9px,#ed7d31 100%);box-shadow:inset 0 1.5px 1px -0.5px rgba(0,0,0,0.25),inset -1px 0 1px -0.5px rgba(0,0,0,0.15)"></div>
<div style="position:absolute;left:187.5px;top:303.5px;font-size:11px;line-height:13.2px;color:#002060;font-weight:bold;font-style:normal;white-space:nowrap;transform:translateX(-50%) scaleX(1.1);transform-origin:50% 50%;">3</div>
<div style="position:absolute;left:187px;top:413.6px;font-size:11px;line-height:13.2px;color:#002060;font-weight:bold;font-style:normal;white-space:nowrap;transform:translateX(-50%) scaleX(0.98);transform-origin:50% 50%;">Jul</div>
<div style="position:absolute;left:262px;top:323px;width:28px;height:82px;background:linear-gradient(to right,#6b3210 0px,#ed7d31 9px,#ed7d31 100%);box-shadow:inset 0 1.5px 1px -0.5px rgba(0,0,0,0.25),inset -1px 0 1px -0.5px rgba(0,0,0,0.15)"></div>
<div style="position:absolute;left:276.5px;top:303.5px;font-size:11px;line-height:13.2px;color:#002060;font-weight:bold;font-style:normal;white-space:nowrap;transform:translateX(-50%) scaleX(1.1);transform-origin:50% 50%;">3</div>
<div style="position:absolute;left:276px;top:413.6px;font-size:11px;line-height:13.2px;color:#002060;font-weight:bold;font-style:normal;white-space:nowrap;transform:translateX(-50%) scaleX(0.98);transform-origin:50% 50%;">Aug</div>
<div style="position:absolute;left:351px;top:351px;width:28px;height:54px;background:linear-gradient(to right,#6b5000 0px,#ffc000 9px,#ffc000 100%);box-shadow:inset 0 1.5px 1px -0.5px rgba(0,0,0,0.25),inset -1px 0 1px -0.5px rgba(0,0,0,0.15)"></div>
<div style="position:absolute;left:365.5px;top:331.0px;font-size:11px;line-height:13.2px;color:#002060;font-weight:bold;font-style:normal;white-space:nowrap;transform:translateX(-50%) scaleX(1.1);transform-origin:50% 50%;">2</div>
<div style="position:absolute;left:365px;top:413.6px;font-size:11px;line-height:13.2px;color:#002060;font-weight:bold;font-style:normal;white-space:nowrap;transform:translateX(-50%) scaleX(0.98);transform-origin:50% 50%;">Sep</div>
<div style="position:absolute;left:440px;top:351px;width:28px;height:54px;background:linear-gradient(to right,#6b5000 0px,#ffc000 9px,#ffc000 100%);box-shadow:inset 0 1.5px 1px -0.5px rgba(0,0,0,0.25),inset -1px 0 1px -0.5px rgba(0,0,0,0.15)"></div>
<div style="position:absolute;left:454.5px;top:331.0px;font-size:11px;line-height:13.2px;color:#002060;font-weight:bold;font-style:normal;white-space:nowrap;transform:translateX(-50%) scaleX(1.1);transform-origin:50% 50%;">2</div>
<div style="position:absolute;left:454px;top:413.6px;font-size:11px;line-height:13.2px;color:#002060;font-weight:bold;font-style:normal;white-space:nowrap;transform:translateX(-50%) scaleX(0.98);transform-origin:50% 50%;">Oct</div>
<div style="position:absolute;left:529px;top:378px;width:28px;height:27px;background:linear-gradient(to right,#6b5000 0px,#ffc000 9px,#ffc000 100%);box-shadow:inset 0 1.5px 1px -0.5px rgba(0,0,0,0.25),inset -1px 0 1px -0.5px rgba(0,0,0,0.15)"></div>
<div style="position:absolute;left:543.5px;top:358.5px;font-size:11px;line-height:13.2px;color:#002060;font-weight:bold;font-style:normal;white-space:nowrap;transform:translateX(-50%) scaleX(1.1);transform-origin:50% 50%;">1</div>
<div style="position:absolute;left:543px;top:413.6px;font-size:11px;line-height:13.2px;color:#002060;font-weight:bold;font-style:normal;white-space:nowrap;transform:translateX(-50%) scaleX(0.98);transform-origin:50% 50%;">Nov</div>
<div style="position:absolute;left:618px;top:323px;width:28px;height:82px;background:linear-gradient(to right,#6b5000 0px,#ffc000 9px,#ffc000 100%);box-shadow:inset 0 1.5px 1px -0.5px rgba(0,0,0,0.25),inset -1px 0 1px -0.5px rgba(0,0,0,0.15)"></div>
<div style="position:absolute;left:632.5px;top:303.5px;font-size:11px;line-height:13.2px;color:#002060;font-weight:bold;font-style:normal;white-space:nowrap;transform:translateX(-50%) scaleX(1.1);transform-origin:50% 50%;">3</div>
<div style="position:absolute;left:632px;top:413.6px;font-size:11px;line-height:13.2px;color:#002060;font-weight:bold;font-style:normal;white-space:nowrap;transform:translateX(-50%) scaleX(0.98);transform-origin:50% 50%;">Dec</div>
<div style="position:absolute;left:707px;top:351px;width:28px;height:54px;background:linear-gradient(to right,#2f4a1e 0px,#70ad47 9px,#70ad47 100%);box-shadow:inset 0 1.5px 1px -0.5px rgba(0,0,0,0.25),inset -1px 0 1px -0.5px rgba(0,0,0,0.15)"></div>
<div style="position:absolute;left:721.5px;top:331.0px;font-size:11px;line-height:13.2px;color:#002060;font-weight:bold;font-style:normal;white-space:nowrap;transform:translateX(-50%) scaleX(1.1);transform-origin:50% 50%;">2</div>
<div style="position:absolute;left:721px;top:413.6px;font-size:11px;line-height:13.2px;color:#002060;font-weight:bold;font-style:normal;white-space:nowrap;transform:translateX(-50%) scaleX(0.98);transform-origin:50% 50%;">Jan</div>
<div style="position:absolute;left:796px;top:351px;width:28px;height:54px;background:linear-gradient(to right,#2f4a1e 0px,#70ad47 9px,#70ad47 100%);box-shadow:inset 0 1.5px 1px -0.5px rgba(0,0,0,0.25),inset -1px 0 1px -0.5px rgba(0,0,0,0.15)"></div>
<div style="position:absolute;left:810.5px;top:331.0px;font-size:11px;line-height:13.2px;color:#002060;font-weight:bold;font-style:normal;white-space:nowrap;transform:translateX(-50%) scaleX(1.1);transform-origin:50% 50%;">2</div>
<div style="position:absolute;left:810px;top:413.6px;font-size:11px;line-height:13.2px;color:#002060;font-weight:bold;font-style:normal;white-space:nowrap;transform:translateX(-50%) scaleX(0.98);transform-origin:50% 50%;">Feb</div>
<div style="position:absolute;left:885px;top:351px;width:28px;height:54px;background:linear-gradient(to right,#2f4a1e 0px,#70ad47 9px,#70ad47 100%);box-shadow:inset 0 1.5px 1px -0.5px rgba(0,0,0,0.25),inset -1px 0 1px -0.5px rgba(0,0,0,0.15)"></div>
<div style="position:absolute;left:899.5px;top:331.0px;font-size:11px;line-height:13.2px;color:#002060;font-weight:bold;font-style:normal;white-space:nowrap;transform:translateX(-50%) scaleX(1.1);transform-origin:50% 50%;">2</div>
<div style="position:absolute;left:899px;top:413.6px;font-size:11px;line-height:13.2px;color:#002060;font-weight:bold;font-style:normal;white-space:nowrap;transform:translateX(-50%) scaleX(0.98);transform-origin:50% 50%;">Mar</div>
<div style="position:absolute;left:974px;top:323px;width:28px;height:82px;background:linear-gradient(to right,#004a21 0px,#00b050 9px,#00b050 100%);box-shadow:inset 0 1.5px 1px -0.5px rgba(0,0,0,0.25),inset -1px 0 1px -0.5px rgba(0,0,0,0.15)"></div>
<div style="position:absolute;left:988.5px;top:303.5px;font-size:11px;line-height:13.2px;color:#002060;font-weight:bold;font-style:normal;white-space:nowrap;transform:translateX(-50%) scaleX(1.1);transform-origin:50% 50%;">3</div>
<div style="position:absolute;left:988px;top:413.6px;font-size:11px;line-height:13.2px;color:#002060;font-weight:bold;font-style:normal;white-space:nowrap;transform:translateX(-50%) scaleX(0.98);transform-origin:50% 50%;">Apr</div>
<div style="position:absolute;left:1063px;top:351px;width:28px;height:54px;background:linear-gradient(to right,#004a21 0px,#00b050 9px,#00b050 100%);box-shadow:inset 0 1.5px 1px -0.5px rgba(0,0,0,0.25),inset -1px 0 1px -0.5px rgba(0,0,0,0.15)"></div>
<div style="position:absolute;left:1077.5px;top:331.0px;font-size:11px;line-height:13.2px;color:#002060;font-weight:bold;font-style:normal;white-space:nowrap;transform:translateX(-50%) scaleX(1.1);transform-origin:50% 50%;">2</div>
<div style="position:absolute;left:1077px;top:413.6px;font-size:11px;line-height:13.2px;color:#002060;font-weight:bold;font-style:normal;white-space:nowrap;transform:translateX(-50%) scaleX(0.98);transform-origin:50% 50%;">May</div>
<div style="position:absolute;left:1152px;top:351px;width:28px;height:54px;background:linear-gradient(to right,#004a21 0px,#00b050 9px,#00b050 100%);box-shadow:inset 0 1.5px 1px -0.5px rgba(0,0,0,0.25),inset -1px 0 1px -0.5px rgba(0,0,0,0.15)"></div>
<div style="position:absolute;left:1166.5px;top:331.0px;font-size:11px;line-height:13.2px;color:#002060;font-weight:bold;font-style:normal;white-space:nowrap;transform:translateX(-50%) scaleX(1.1);transform-origin:50% 50%;">2</div>
<div style="position:absolute;left:1166px;top:413.6px;font-size:11px;line-height:13.2px;color:#002060;font-weight:bold;font-style:normal;white-space:nowrap;transform:translateX(-50%) scaleX(0.98);transform-origin:50% 50%;">Jun</div>
<div style="position:absolute;left:365.3px;top:437.9px;font-size:11.5px;line-height:13.8px;color:#002060;font-weight:bold;font-style:normal;white-space:nowrap;transform:translateX(-50%) scaleX(0.98);transform-origin:50% 50%;">2024</div>
<div style="position:absolute;left:943.5px;top:437.9px;font-size:11.5px;line-height:13.8px;color:#002060;font-weight:bold;font-style:normal;white-space:nowrap;transform:translateX(-50%) scaleX(0.98);transform-origin:50% 50%;">2025</div>
<svg style="position:absolute;left:0;top:0;pointer-events:none" width="1237" height="464"><polyline points="98.5,267.5 187.5,267.5 276.5,267.5 365.5,267.5 454.5,267.5 543.5,267.5 632.5,267.5 721.5,267.5 810.5,267.5 899.5,267.5 988.5,267.5 1077.5,267.5 1166.5,267.5" fill="none" stroke="#ed7d31" stroke-width="2.3"/><circle cx="98.5" cy="267.5" r="3.6" fill="#ed7d31"/><circle cx="187.5" cy="267.5" r="3.6" fill="#ed7d31"/><circle cx="276.5" cy="267.5" r="3.6" fill="#ed7d31"/><circle cx="365.5" cy="267.5" r="3.6" fill="#ed7d31"/><circle cx="454.5" cy="267.5" r="3.6" fill="#ed7d31"/><circle cx="543.5" cy="267.5" r="3.6" fill="#ed7d31"/><circle cx="632.5" cy="267.5" r="3.6" fill="#ed7d31"/><circle cx="721.5" cy="267.5" r="3.6" fill="#ed7d31"/><circle cx="810.5" cy="267.5" r="3.6" fill="#ed7d31"/><circle cx="899.5" cy="267.5" r="3.6" fill="#ed7d31"/><circle cx="988.5" cy="267.5" r="3.6" fill="#ed7d31"/><circle cx="1077.5" cy="267.5" r="3.6" fill="#ed7d31"/><circle cx="1166.5" cy="267.5" r="3.6" fill="#ed7d31"/></svg>
<div style="position:absolute;left:95.5px;top:259.7px;font-size:11px;line-height:13.2px;color:#002060;font-weight:bold;font-style:normal;white-space:nowrap;transform:translateX(-50%) scaleX(1.1);transform-origin:50% 50%;">5</div>
<div style="position:absolute;left:189.7px;top:259.7px;font-size:11px;line-height:13.2px;color:#002060;font-weight:bold;font-style:normal;white-space:nowrap;transform:translateX(-50%) scaleX(1.1);transform-origin:50% 50%;">5</div>
<div style="position:absolute;left:274.7px;top:259.7px;font-size:11px;line-height:13.2px;color:#002060;font-weight:bold;font-style:normal;white-space:nowrap;transform:translateX(-50%) scaleX(1.1);transform-origin:50% 50%;">5</div>
<div style="position:absolute;left:364px;top:259.7px;font-size:11px;line-height:13.2px;color:#002060;font-weight:bold;font-style:normal;white-space:nowrap;transform:translateX(-50%) scaleX(1.1);transform-origin:50% 50%;">5</div>
<div style="position:absolute;left:456.4px;top:259.7px;font-size:11px;line-height:13.2px;color:#002060;font-weight:bold;font-style:normal;white-space:nowrap;transform:translateX(-50%) scaleX(1.1);transform-origin:50% 50%;">5</div>
<div style="position:absolute;left:541.6px;top:259.7px;font-size:11px;line-height:13.2px;color:#002060;font-weight:bold;font-style:normal;white-space:nowrap;transform:translateX(-50%) scaleX(1.1);transform-origin:50% 50%;">5</div>
<div style="position:absolute;left:630.8px;top:259.7px;font-size:11px;line-height:13.2px;color:#002060;font-weight:bold;font-style:normal;white-space:nowrap;transform:translateX(-50%) scaleX(1.1);transform-origin:50% 50%;">5</div>
<div style="position:absolute;left:719.8px;top:259.7px;font-size:11px;line-height:13.2px;color:#002060;font-weight:bold;font-style:normal;white-space:nowrap;transform:translateX(-50%) scaleX(1.1);transform-origin:50% 50%;">5</div>
<div style="position:absolute;left:808.8px;top:259.7px;font-size:11px;line-height:13.2px;color:#002060;font-weight:bold;font-style:normal;white-space:nowrap;transform:translateX(-50%) scaleX(1.1);transform-origin:50% 50%;">5</div>
<div style="position:absolute;left:897.8px;top:259.7px;font-size:11px;line-height:13.2px;color:#002060;font-weight:bold;font-style:normal;white-space:nowrap;transform:translateX(-50%) scaleX(1.1);transform-origin:50% 50%;">5</div>
<div style="position:absolute;left:986.4px;top:259.7px;font-size:11px;line-height:13.2px;color:#002060;font-weight:bold;font-style:normal;white-space:nowrap;transform:translateX(-50%) scaleX(1.1);transform-origin:50% 50%;">5</div>
<div style="position:absolute;left:1075.8px;top:259.7px;font-size:11px;line-height:13.2px;color:#002060;font-weight:bold;font-style:normal;white-space:nowrap;transform:translateX(-50%) scaleX(1.1);transform-origin:50% 50%;">5</div>
<div style="position:absolute;left:1158.5px;top:259.7px;font-size:11px;line-height:13.2px;color:#002060;font-weight:bold;font-style:normal;white-space:nowrap;transform:translateX(-50%) scaleX(1.1);transform-origin:50% 50%;">5</div>
<div style="position:absolute;left:499.70px;top:476.24px;font-size:13.91px;line-height:16.70px;color:#002060;font-weight:bold;font-style:normal;white-space:nowrap;transform:scaleX(0.9937);transform-origin:0 0">Replacement by Range Total (Customer)</div>
<div style="position:absolute;left:59px;top:510px;width:1164px;height:1px;background:#d9d9d9;"></div>
<div style="position:absolute;left:43px;top:503.7px;font-size:10.5px;line-height:12.6px;color:#002060;font-weight:bold;font-style:normal;white-space:nowrap;transform:translateX(-50%) scaleX(1.1);transform-origin:50% 50%;">25</div>
<div style="position:absolute;left:59px;top:543px;width:1164px;height:1px;background:#d9d9d9;"></div>
<div style="position:absolute;left:43px;top:536.7px;font-size:10.5px;line-height:12.6px;color:#002060;font-weight:bold;font-style:normal;white-space:nowrap;transform:translateX(-50%) scaleX(1.1);transform-origin:50% 50%;">20</div>
<div style="position:absolute;left:59px;top:576px;width:1164px;height:1px;background:#d9d9d9;"></div>
<div style="position:absolute;left:43px;top:569.7px;font-size:10.5px;line-height:12.6px;color:#002060;font-weight:bold;font-style:normal;white-space:nowrap;transform:translateX(-50%) scaleX(1.1);transform-origin:50% 50%;">15</div>
<div style="position:absolute;left:59px;top:608px;width:1164px;height:1px;background:#d9d9d9;"></div>
<div style="position:absolute;left:43px;top:602.2px;font-size:10.5px;line-height:12.6px;color:#002060;font-weight:bold;font-style:normal;white-space:nowrap;transform:translateX(-50%) scaleX(1.1);transform-origin:50% 50%;">10</div>
<div style="position:absolute;left:59px;top:642px;width:1164px;height:1px;background:#d9d9d9;"></div>
<div style="position:absolute;left:43px;top:635.2px;font-size:10.5px;line-height:12.6px;color:#002060;font-weight:bold;font-style:normal;white-space:nowrap;transform:translateX(-50%) scaleX(1.1);transform-origin:50% 50%;">5</div>
<div style="position:absolute;left:59px;top:674px;width:1164px;height:1px;background:#d9d9d9;"></div>
<div style="position:absolute;left:43px;top:668.2px;font-size:10.5px;line-height:12.6px;color:#002060;font-weight:bold;font-style:normal;white-space:nowrap;transform:translateX(-50%) scaleX(1.1);transform-origin:50% 50%;">0</div>
<div style="position:absolute;left:160px;top:576px;width:91px;height:99px;background:linear-gradient(to right,#4a0000 0px,#c00000 10px,#c00000 100%);box-shadow:inset 0 1.5px 1px -0.5px rgba(0,0,0,0.25),inset -1px 0 1px -0.5px rgba(0,0,0,0.15)"></div>
<div style="position:absolute;left:206.0px;top:556.4px;font-size:11px;line-height:13.2px;color:#002060;font-weight:bold;font-style:normal;white-space:nowrap;transform:translateX(-50%) scaleX(1.1);transform-origin:50% 50%;">15</div>
<div style="position:absolute;left:176.69px;top:682.56px;font-size:11.88px;line-height:14.26px;color:#002060;font-weight:bold;font-style:normal;white-space:nowrap;transform:scaleX(0.8709);transform-origin:0 0">Customer A</div>
<div style="position:absolute;left:450px;top:582px;width:91px;height:93px;background:linear-gradient(to right,#6b3210 0px,#ed7d31 10px,#ed7d31 100%);box-shadow:inset 0 1.5px 1px -0.5px rgba(0,0,0,0.25),inset -1px 0 1px -0.5px rgba(0,0,0,0.15)"></div>
<div style="position:absolute;left:496.0px;top:562.4px;font-size:11px;line-height:13.2px;color:#002060;font-weight:bold;font-style:normal;white-space:nowrap;transform:translateX(-50%) scaleX(1.1);transform-origin:50% 50%;">14</div>
<div style="position:absolute;left:466.69px;top:682.56px;font-size:11.88px;line-height:14.26px;color:#002060;font-weight:bold;font-style:normal;white-space:nowrap;transform:scaleX(0.8686);transform-origin:0 0">Customer B</div>
<div style="position:absolute;left:741px;top:596px;width:91px;height:79px;background:linear-gradient(to right,#6b5000 0px,#ffc000 10px,#ffc000 100%);box-shadow:inset 0 1.5px 1px -0.5px rgba(0,0,0,0.25),inset -1px 0 1px -0.5px rgba(0,0,0,0.15)"></div>
<div style="position:absolute;left:787.0px;top:576.4px;font-size:11px;line-height:13.2px;color:#002060;font-weight:bold;font-style:normal;white-space:nowrap;transform:translateX(-50%) scaleX(1.1);transform-origin:50% 50%;">12</div>
<div style="position:absolute;left:757.69px;top:682.56px;font-size:11.88px;line-height:14.26px;color:#002060;font-weight:bold;font-style:normal;white-space:nowrap;transform:scaleX(0.8655);transform-origin:0 0">Customer C</div>
<div style="position:absolute;left:1031px;top:536px;width:92px;height:139px;background:linear-gradient(to right,#2f4a1e 0px,#70ad47 10px,#70ad47 100%);box-shadow:inset 0 1.5px 1px -0.5px rgba(0,0,0,0.25),inset -1px 0 1px -0.5px rgba(0,0,0,0.15)"></div>
<div style="position:absolute;left:1077.5px;top:516.4px;font-size:11px;line-height:13.2px;color:#002060;font-weight:bold;font-style:normal;white-space:nowrap;transform:translateX(-50%) scaleX(1.1);transform-origin:50% 50%;">21</div>
<div style="position:absolute;left:1048.19px;top:682.56px;font-size:11.88px;line-height:14.26px;color:#002060;font-weight:bold;font-style:normal;white-space:nowrap;transform:scaleX(0.8678);transform-origin:0 0">Customer D</div>
<div style="position:absolute;left:1313.88px;top:234.13px;font-size:14.35px;line-height:17.22px;color:#002060;font-weight:bold;font-style:normal;white-space:nowrap;transform:scaleX(0.9835);transform-origin:0 0">REPLACEMENT (CONCLUSION)</div>
<div style="position:absolute;left:1334px;top:261px;width:7px;height:7px;background:#ff0000;"></div>
<div style="position:absolute;left:1343.50px;top:257.37px;font-size:10.29px;line-height:12.35px;color:#002060;font-weight:bold;font-style:normal;white-space:nowrap;transform:scaleX(0.9718);transform-origin:0 0">Scrap</div>
<div style="position:absolute;left:1390px;top:261px;width:7px;height:7px;background:#00b050;"></div>
<div style="position:absolute;left:1400.28px;top:257.37px;font-size:10.29px;line-height:12.35px;color:#002060;font-weight:bold;font-style:normal;white-space:nowrap;transform:scaleX(1.0275);transform-origin:0 0">Sparepart</div>
<div style="position:absolute;left:1469px;top:261px;width:7px;height:7px;background:#e5a800;"></div>
<div style="position:absolute;left:1478.21px;top:257.37px;font-size:10.29px;line-height:12.35px;color:#002060;font-weight:bold;font-style:normal;white-space:nowrap;transform:scaleX(1.0279);transform-origin:0 0">Repair</div>
<svg style="position:absolute;left:1340px;top:304.2px" width="140" height="140"><clipPath id="cp1"><path d="M70.00 6.20 A63.8 63.8 0 1 1 22.59 112.69 L46.37 91.28 A31.8 31.8 0 1 0 70.00 38.20z"/></clipPath><path d="M70.00 6.20 A63.8 63.8 0 1 1 22.59 112.69 L46.37 91.28 A31.8 31.8 0 1 0 70.00 38.20z" fill="#ff0000" stroke="#e60000" stroke-width="11" clip-path="url(#cp1)"/><clipPath id="cp2"><path d="M22.59 112.69 A63.8 63.8 0 0 1 44.05 11.72 L57.07 40.95 A31.8 31.8 0 0 0 46.37 91.28z"/></clipPath><path d="M22.59 112.69 A63.8 63.8 0 0 1 44.05 11.72 L57.07 40.95 A31.8 31.8 0 0 0 46.37 91.28z" fill="#00b050" stroke="#00a046" stroke-width="11" clip-path="url(#cp2)"/><clipPath id="cp3"><path d="M44.05 11.72 A63.8 63.8 0 0 1 70.00 6.20 L70.00 38.20 A31.8 31.8 0 0 0 57.07 40.95z"/></clipPath><path d="M44.05 11.72 A63.8 63.8 0 0 1 70.00 6.20 L70.00 38.20 A31.8 31.8 0 0 0 57.07 40.95z" fill="#ffc000" stroke="#e5a800" stroke-width="11" clip-path="url(#cp3)"/></svg>
<svg style="position:absolute;left:1237px;top:224px" width="346" height="240" fill="none" stroke="#a6a6a6" stroke-width="1"><path d="M147.9 72.8 h5 l10.4 30.3 M93 174.1 h5.8 l27.8 -33.5 M281.6 195.5 h-6.3 l-58.7 -25.2"/></svg>
<div style="position:absolute;left:1355.46px;top:290.87px;font-size:11.45px;line-height:13.74px;color:#002060;font-weight:bold;font-style:normal;white-space:nowrap;transform:scaleX(0.8372);transform-origin:0 0">2 Pcs</div>
<div style="position:absolute;left:1299.96px;top:391.83px;font-size:11.59px;line-height:13.91px;color:#002060;font-weight:bold;font-style:normal;white-space:nowrap;transform:scaleX(0.8370);transform-origin:0 0">9 Pcs</div>
<div style="position:absolute;left:1522.21px;top:413.14px;font-size:11.16px;line-height:13.39px;color:#002060;font-weight:bold;font-style:normal;white-space:nowrap;transform:scaleX(0.8815);transform-origin:0 0">19 Pcs</div>
<div style="position:absolute;left:1325.99px;top:477.40px;font-size:14.06px;line-height:16.87px;color:#002060;font-weight:bold;font-style:normal;white-space:nowrap;transform:scaleX(0.9980);transform-origin:0 0">REPLACEMENT (STATUS)</div>
<div style="position:absolute;left:1371px;top:511px;width:7px;height:8px;background:#ff0000;"></div>
<div style="position:absolute;left:1380.97px;top:508.80px;font-size:10.14px;line-height:12.17px;color:#002060;font-weight:bold;font-style:normal;white-space:nowrap;transform:scaleX(1.0680);transform-origin:0 0">Open</div>
<div style="position:absolute;left:1417px;top:511px;width:7px;height:8px;background:#00b050;"></div>
<div style="position:absolute;left:1426.40px;top:508.80px;font-size:10.14px;line-height:12.17px;color:#002060;font-weight:bold;font-style:normal;white-space:nowrap;transform:scaleX(0.9876);transform-origin:0 0">Close</div>
<svg style="position:absolute;left:1340px;top:544.8px" width="140" height="140"><clipPath id="cp4"><path d="M70.00 6.20 A63.8 63.8 0 0 1 130.68 89.72 L100.24 79.83 A31.8 31.8 0 0 0 70.00 38.20z"/></clipPath><path d="M70.00 6.20 A63.8 63.8 0 0 1 130.68 89.72 L100.24 79.83 A31.8 31.8 0 0 0 70.00 38.20z" fill="#ff0000" stroke="#e60000" stroke-width="11" clip-path="url(#cp4)"/><clipPath id="cp5"><path d="M130.68 89.72 A63.8 63.8 0 1 1 70.00 6.20 L70.00 38.20 A31.8 31.8 0 1 0 100.24 79.83z"/></clipPath><path d="M130.68 89.72 A63.8 63.8 0 1 1 70.00 6.20 L70.00 38.20 A31.8 31.8 0 1 0 100.24 79.83z" fill="#00b050" stroke="#00a046" stroke-width="11" clip-path="url(#cp5)"/></svg>
<svg style="position:absolute;left:1237px;top:464px" width="346" height="240" fill="none" stroke="#a6a6a6" stroke-width="1"><path d="M228.8 88.2 h-6 l-11.5 35.2 M101.4 195.5 h6 l27.2 -16.3"/></svg>
<div style="position:absolute;left:1469.16px;top:547.07px;font-size:11.45px;line-height:13.74px;color:#002060;font-weight:bold;font-style:normal;white-space:nowrap;transform:scaleX(0.8441);transform-origin:0 0">9 Pcs</div>
<div style="position:absolute;left:1303.56px;top:652.87px;font-size:11.45px;line-height:13.74px;color:#002060;font-weight:bold;font-style:normal;white-space:nowrap;transform:scaleX(0.8551);transform-origin:0 0">21 Pcs</div>
</div></body></html>
